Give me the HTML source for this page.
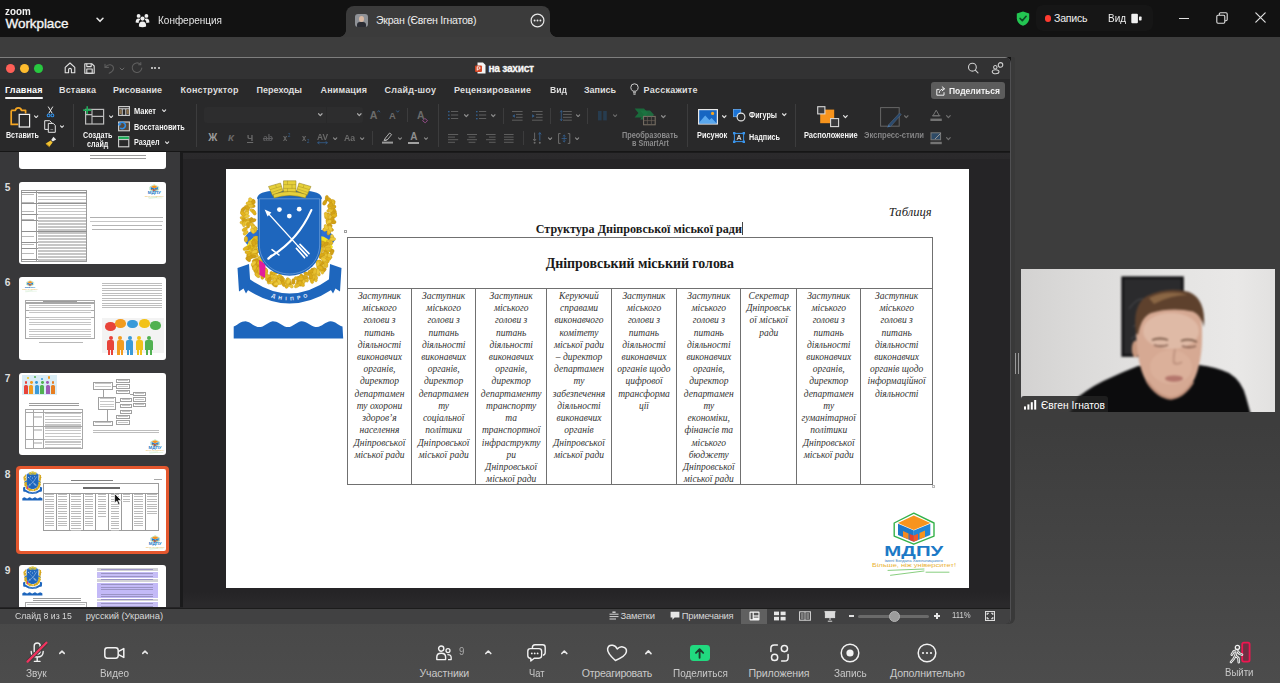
<!DOCTYPE html>
<html lang="ru">
<head>
<meta charset="utf-8">
<title>Zoom Workplace</title>
<style>
*{box-sizing:border-box;margin:0;padding:0}
html,body{width:1280px;height:683px;overflow:hidden;background:#3e3e3e}
body{font-family:"Liberation Sans",sans-serif;color:#e8e8e8;font-size:11px}
#root{position:relative;width:1280px;height:683px;overflow:hidden;background:linear-gradient(180deg,#3d3d3d 0,#3d3d3d 425px,#4c4c4c 683px)}
.a{position:absolute}
.t{position:absolute;white-space:nowrap;line-height:1}
svg{position:absolute;overflow:visible}
#topbar{left:0;top:0;width:1280px;height:37px;background:#121212}
#tab{left:346px;top:5.5px;width:204px;height:31.5px;background:#3b3b3b;border-radius:8px 8px 0 0}
#ppt{left:0;top:57px;width:1011.4px;height:567px;background:#252426;border-radius:0 6px 5px 0;border-right:1px solid #505052;overflow:hidden}
#ptitle{left:0;top:0;width:1012px;height:22px;background:#323233;border-top:1px solid #7e7e7e}
#ptabs{left:0;top:22px;width:1012px;height:21px;background:#29292a}
#ribbon{left:0;top:43px;width:1012px;height:52px;background:#29292a;border-bottom:1px solid #161616}
#panel{left:0;top:95px;width:180px;height:455px;background:#38383a;overflow:hidden}
#pdiv{left:180px;top:95px;width:3px;height:455px;background:#1a1a1b}
#main{left:183px;top:95px;width:829px;height:456px;background:linear-gradient(180deg,#1b1b1c 0,#1b1b1c 1.4px,#2b2a2c 1.4px,#2a292b 7px,#252426 7.5px,#252426 440px,#2a292b 452px)}
#slide{left:225.8px;top:111.8px;width:743.5px;height:419.4px;background:#fff;overflow:hidden}
#status{left:0;top:550.6px;width:1012px;height:16.4px;background:#414142;border-top:1px solid #1c1c1c}
#tbl{border:1px solid #707070}
.v{position:absolute;top:119.4px;width:1px;height:196.2px;background:#707070}
.c{text-align:center;font:italic 9.5px/12.23px "Liberation Serif",serif;color:#333;white-space:nowrap}
#tool{left:0;top:624px;width:1280px;height:59px}
#cam{left:1021px;top:269px;width:254px;height:143px;background:#c9c8c6;overflow:hidden}

</style>
</head>
<body>
<div id="root">
<div class="a" id="topbar"></div>
<div class="a" id="tab"></div>
<div class="a" style="left:339px;top:30px;width:7px;height:7px;background:radial-gradient(circle at 0 0,transparent 6.6px,#3b3b3b 7.2px)"></div>
<div class="a" style="left:550px;top:30px;width:7px;height:7px;background:radial-gradient(circle at 100% 0,transparent 6.6px,#3b3b3b 7.2px)"></div>
<div class="t" style='left:5.3px;top:6.6px;font-size:10.2px;color:#f2f2f2;transform:scaleX(0.966);transform-origin:0 0;font-weight:700;'>zoom</div>
<div class="t" style='left:5.6px;top:17.2px;font-size:13.5px;color:#f5f5f5;letter-spacing:-0.08px;-webkit-text-stroke:.35px #f5f5f5;'>Workplace</div>
<svg style="left:95.6px;top:16.8px" width="8" height="6.4" viewBox="0 0 10 8"><path d="M1.3,1.6 L5,5.4 L8.7,1.6" fill="none" stroke="#e6e6e6" stroke-width="2" stroke-linecap="round" stroke-linejoin="round"/></svg>
<svg style="left:135px;top:12.5px" width="15" height="15" viewBox="0 0 15 15" fill="#f0f0f0"><circle cx="7.5" cy="5.6" r="2.1"/><circle cx="3.6" cy="2.9" r="1.9"/><circle cx="11.4" cy="2.9" r="1.9"/><path d="M0.6,9.6 Q0.6,5.6 3.6,5.6 Q5,5.6 5.3,6.6 Q3.4,7.8 3.6,10 Z"/><path d="M14.4,9.6 Q14.4,5.6 11.4,5.6 Q10,5.6 9.7,6.6 Q11.6,7.8 11.4,10 Z"/><path d="M3.9,13.6 Q3.5,8.4 7.5,8.4 Q11.5,8.4 11.1,13.6 Q7.5,15 3.9,13.6 Z"/></svg>
<div class="t" style='left:158.0px;top:15.2px;font-size:10.6px;color:#e4e4e4;transform:scaleX(0.943);transform-origin:0 0;'>Конференция</div>
<div class="a" style="left:355px;top:14px;width:13px;height:13px;border-radius:3px;background:#8f9297;overflow:hidden"><div class="a" style="left:4px;top:2px;width:5px;height:6px;border-radius:50%;background:#d9b8a2"></div><div class="a" style="left:2px;top:8px;width:9px;height:6px;border-radius:3px 3px 0 0;background:#2a2c33"></div></div>
<div class="t" style='left:376.0px;top:15.3px;font-size:10.6px;color:#ececec;letter-spacing:-0.28px;'>Экран (Євген Ігнатов)</div>
<svg style="left:529.5px;top:12.5px" width="15" height="15" viewBox="0 0 15 15"><circle cx="7.5" cy="7.5" r="6.4" fill="none" stroke="#e8e8e8" stroke-width="1.2"/><circle cx="4.6" cy="7.5" r=".95" fill="#e8e8e8"/><circle cx="7.5" cy="7.5" r=".95" fill="#e8e8e8"/><circle cx="10.4" cy="7.5" r=".95" fill="#e8e8e8"/></svg>
<div class="a" style="left:1036px;top:5px;width:117px;height:26px;border-radius:7px;background:#161616"></div>
<svg style="left:1015.5px;top:10.5px" width="14" height="15" viewBox="0 0 14 15"><path d="M7,0.4 L13.2,2.6 V7.2 C13.2,11 10.3,13.6 7,14.7 C3.7,13.6 0.8,11 0.8,7.2 V2.6 Z" fill="#23c552"/><path d="M4.1,7.5 L6.3,9.7 L10.1,5.3" fill="none" stroke="#0d4a26" stroke-width="1.7" stroke-linecap="round" stroke-linejoin="round"/></svg>
<div class="a" style="left:1044.5px;top:15px;width:6.5px;height:6.5px;border-radius:50%;background:#ff3b30"></div>
<div class="t" style='left:1054.0px;top:13.0px;font-size:10.6px;color:#f0f0f0;letter-spacing:-0.25px;'>Запись</div>
<div class="t" style='left:1107.5px;top:13.0px;font-size:10.6px;color:#f0f0f0;transform:scaleX(0.939);transform-origin:0 0;'>Вид</div>
<svg style="left:1131px;top:12.5px" width="11" height="11" viewBox="0 0 11 11"><rect x="0.3" y="0.8" width="6.6" height="9.4" rx="1" fill="#f0f0f0"/><rect x="8" y="3.6" width="2.6" height="3.8" rx=".6" fill="#f0f0f0"/></svg>
<div class="a" style="left:1178.5px;top:17.5px;width:10.5px;height:1.2px;background:#e0e0e0"></div>
<svg style="left:1215.5px;top:11.5px" width="12" height="12" viewBox="0 0 12 12" fill="none" stroke="#e0e0e0" stroke-width="1.1"><rect x="0.8" y="3.2" width="8" height="8" rx="1.2"/><path d="M3.3,3 V2 Q3.3,0.8 4.5,0.8 H10 Q11.2,0.8 11.2,2 V7.5 Q11.2,8.7 10,8.7 H9"/></svg>
<svg style="left:1254.5px;top:12px" width="11" height="11" viewBox="0 0 11 11"><path d="M0.8,0.8 L10.2,10.2 M10.2,0.8 L0.8,10.2" stroke="#e0e0e0" stroke-width="1.2" stroke-linecap="round"/></svg>
<div class="a" id="pptshadow" style="left:1004px;top:57px;width:10.6px;height:567px;background:#393939;border-radius:0 2px 6px 0"></div><div class="a" style="left:1004px;top:57px;width:7.4px;height:7px;background:#141414"></div>
<div class="a" id="ppt">
<div class="a" id="ptitle"></div><div class="a" id="ptabs"></div>
<div class="a" style="left:5.9px;top:6.5px;width:9.4px;height:9.4px;border-radius:50%;background:#fe5f57"></div>
<div class="a" style="left:19.9px;top:6.5px;width:9.4px;height:9.4px;border-radius:50%;background:#febc2e"></div>
<div class="a" style="left:34.0px;top:6.5px;width:9.4px;height:9.4px;border-radius:50%;background:#28c840"></div>
<svg style="left:64px;top:5.0px" width="12" height="12" viewBox="0 0 12 12" fill="none" stroke="#e2e2e2" stroke-width="1.1" stroke-linejoin="round"><path d="M1.2,5.4 L6,1 L10.8,5.4 V10.8 H7.4 V7.6 Q7.4,6.4 6,6.4 Q4.6,6.4 4.6,7.6 V10.8 H1.2 Z"/></svg>
<svg style="left:83.5px;top:5.8px" width="11" height="11" viewBox="0 0 11 11" fill="none" stroke="#e2e2e2" stroke-width="1.1" stroke-linejoin="round"><path d="M0.8,0.8 H8 L10.2,3 V10.2 H0.8 Z"/><path d="M2.8,0.8 V3.6 H7.2 V0.8"/><rect x="2.8" y="6" width="5.4" height="4.2"/></svg>
<svg style="left:103.5px;top:5.6px" width="11" height="11" viewBox="0 0 11 11" fill="none" stroke="#5e5e5e" stroke-width="1.1" stroke-linecap="round" stroke-linejoin="round"><path d="M1,1.2 V4.4 H4.4"/><path d="M1.3,4.2 Q3.4,1.4 6.4,1.8 Q9.8,2.6 9.4,6 Q9,8.6 5.2,10.2"/></svg>
<svg style="left:118.5px;top:9.6px" width="6" height="4" viewBox="0 0 6 4"><path d="M0.8,0.8 L3,3 L5.2,0.8" fill="none" stroke="#6a6a6a" stroke-width="1"/></svg>
<svg style="left:130.5px;top:5.4px" width="12" height="12" viewBox="0 0 12 12" fill="none" stroke="#5e5e5e" stroke-width="1.1" stroke-linecap="round"><path d="M9.4,2.3 A4.8,4.8 0 1 0 10.8,6"/><path d="M9.8,0.6 V2.8 H7.6"/></svg>
<div class="a" style="left:150.6px;top:10.2px;width:2px;height:2px;border-radius:50%;background:#e0e0e0"></div>
<div class="a" style="left:154.3px;top:10.2px;width:2px;height:2px;border-radius:50%;background:#e0e0e0"></div>
<div class="a" style="left:158.0px;top:10.2px;width:2px;height:2px;border-radius:50%;background:#e0e0e0"></div>
<svg style="left:475px;top:5.0px" width="11" height="12" viewBox="0 0 11 12"><path d="M2.5,0.5 H8 L10.5,3 V11.5 H2.5 Z" fill="#f4f4f4"/><rect x="0" y="3.4" width="7" height="6.6" rx="1" fill="#d24625"/><path d="M2.2,8.6 V4.8 H3.7 Q5,4.8 5,6 Q5,7.2 3.7,7.2 H2.2" fill="none" stroke="#fff" stroke-width=".9"/></svg>
<div class="t" style='left:488.5px;top:6.8px;font-size:10.2px;color:#f6f6f6;letter-spacing:-0.29px;font-weight:700;-webkit-text-stroke:.3px #f6f6f6;'>на захист</div>
<svg style="left:967px;top:5.0px" width="12" height="12" viewBox="0 0 12 12" fill="none" stroke="#cfcfcf" stroke-width="1.1" stroke-linecap="round"><circle cx="5.4" cy="5.2" r="3.9"/><path d="M8.3,8.2 L11,10.9"/></svg>
<svg style="left:991px;top:5.0px" width="13" height="13" viewBox="0 0 13 13" fill="none" stroke="#cfcfcf" stroke-width="1.05"><circle cx="9.5" cy="2.9" r="2.3"/><circle cx="4.3" cy="5.2" r="1.7"/><ellipse cx="4.6" cy="9.8" rx="3.4" ry="2"/></svg>
<div class="t" style='left:5.0px;top:29.1px;font-size:9px;color:#ffffff;letter-spacing:0.15px;font-weight:700;'>Главная</div>
<div class="t" style='left:59.0px;top:29.1px;font-size:9px;color:#dedede;letter-spacing:0.17px;font-weight:700;'>Вставка</div>
<div class="t" style='left:113.0px;top:29.1px;font-size:9px;color:#dedede;letter-spacing:0.07px;font-weight:700;'>Рисование</div>
<div class="t" style='left:180.5px;top:29.1px;font-size:9px;color:#dedede;letter-spacing:0.20px;font-weight:700;'>Конструктор</div>
<div class="t" style='left:256.5px;top:29.1px;font-size:9px;color:#dedede;letter-spacing:0.01px;font-weight:700;'>Переходы</div>
<div class="t" style='left:320.5px;top:29.1px;font-size:9px;color:#dedede;letter-spacing:0.17px;font-weight:700;'>Анимация</div>
<div class="t" style='left:384.5px;top:29.1px;font-size:9px;color:#dedede;letter-spacing:0.27px;font-weight:700;'>Слайд-шоу</div>
<div class="t" style='left:454.0px;top:29.1px;font-size:9px;color:#dedede;letter-spacing:0.22px;font-weight:700;'>Рецензирование</div>
<div class="t" style='left:549.5px;top:29.1px;font-size:9px;color:#dedede;transform:scaleX(0.958);transform-origin:0 0;font-weight:700;'>Вид</div>
<div class="t" style='left:584.0px;top:29.1px;font-size:9px;color:#dedede;letter-spacing:-0.03px;font-weight:700;'>Запись</div>
<div class="t" style='left:643.5px;top:29.1px;font-size:9px;color:#dedede;letter-spacing:0.25px;font-weight:700;'>Расскажите</div>
<div class="a" style="left:5px;top:40.4px;width:37.5px;height:1.6px;background:#f4f4f4;border-radius:1px"></div>
<svg style="left:629.5px;top:26.2px" width="9" height="12" viewBox="0 0 9 12" fill="none" stroke="#d0d0d0" stroke-width="1"><path d="M2.8,8.2 Q0.8,6.6 0.8,4.4 Q0.8,0.8 4.5,0.8 Q8.2,0.8 8.2,4.4 Q8.2,6.6 6.2,8.2 Z"/><path d="M3,9.8 H6 M3.4,11.2 H5.6"/></svg>
<div class="a" style="left:930.5px;top:25.3px;width:74px;height:17px;border-radius:3px;background:#5c5c5c"></div>
<svg style="left:936px;top:28.8px" width="10" height="10" viewBox="0 0 10 10" fill="none" stroke="#f0f0f0" stroke-width="1" stroke-linejoin="round" stroke-linecap="round"><path d="M3,3.4 H0.8 V9.2 H8 V6.6"/><path d="M3.2,6.6 Q3.6,3 8,2.8"/><path d="M6.2,0.8 L8.6,2.8 L6.2,4.8"/></svg>
<div class="t" style='left:949.0px;top:29.2px;font-size:9.4px;color:#f4f4f4;transform:scaleX(0.906);transform-origin:0 0;font-weight:700;'>Поделиться</div>
<div class="a" id="ribbon"></div>
<svg style="left:10.0px;top:50.0px" width="21.0" height="21.0" viewBox="0 0 21 21" ><path d="M1.2,3.4 H5.4 Q5.8,0.8 8.4,0.8 Q11,0.8 11.4,3.4 H15.6 V6.5 M1.2,3.4 V17.4 H8.2" fill="none" stroke="#f5a623" stroke-width="1.7" stroke-linejoin="round"/><rect x="9.2" y="7.4" width="10.4" height="12.6" fill="#2a2a2b" stroke="#f2f2f2" stroke-width="1.2"/></svg>
<svg style="left:33.5px;top:57.7px" width="4.3" height="3.6" viewBox="0 0 10 7"><path d="M1.2,1.2 L5,5.2 L8.8,1.2" fill="none" stroke="#e4e4e4" stroke-width="2.6" stroke-linecap="round" stroke-linejoin="round"/></svg>
<div class="t" style='left:5.7px;top:74.8px;font-size:8.2px;color:#f4f4f4;transform:scaleX(0.863);transform-origin:0 0;font-weight:700;'>Вставить</div>
<svg style="left:46.5px;top:48.8px" width="7.0" height="12.0" viewBox="0 0 7 12" ><path d="M1.2,0.6 L5.2,7.4 M5.8,0.6 L1.8,7.4" stroke="#e8e8e8" stroke-width="1" fill="none"/><circle cx="1.6" cy="9.4" r="1.4" fill="none" stroke="#2f8fe8" stroke-width="1.1"/><circle cx="5.4" cy="9.4" r="1.4" fill="none" stroke="#2f8fe8" stroke-width="1.1"/></svg>
<svg style="left:44.2px;top:63.3px" width="12.0" height="13.0" viewBox="0 0 12 13" ><path d="M0.7,0.7 H5.6 L7.4,2.4 V9.4 H0.7 Z" fill="#2a2a2b" stroke="#e6e6e6" stroke-width="1"/><path d="M4.3,3.4 H9.2 L11.3,5.4 V12.3 H4.3 Z" fill="#2a2a2b" stroke="#e6e6e6" stroke-width="1"/><path d="M6.4,9.6 H9.2" stroke="#9a9a9a" stroke-width=".8"/></svg>
<svg style="left:60.2px;top:67.9px" width="4.0" height="3.6" viewBox="0 0 10 7"><path d="M1.2,1.2 L5,5.2 L8.8,1.2" fill="none" stroke="#e4e4e4" stroke-width="2.6" stroke-linecap="round" stroke-linejoin="round"/></svg>
<svg style="left:44.5px;top:79.0px" width="12.0" height="12.0" viewBox="0 0 12 12" ><path d="M8.4,0.8 L11.2,3.6 L7.8,5.6 L6.2,4 Z" fill="#e8e8e8"/><path d="M5.6,4.4 L7.6,6.4 L4.4,10.8 L0.8,7.6 Z" fill="#f2c230"/><path d="M0.8,7.6 L4.4,10.8" stroke="#b98a14" stroke-width="1"/></svg>
<div class="a" style="left:73.0px;top:47.0px;width:1px;height:43.0px;background:#3c3c3d"></div>
<svg style="left:82.5px;top:48.6px" width="22.0" height="20.0" viewBox="0 0 22 20" ><rect x="2.6" y="3.4" width="18" height="14.6" fill="none" stroke="#bdbdbd" stroke-width="1.2"/><path d="M9,3.4 V18 M9,10.4 H20.6 M2.6,8.6 H9" stroke="#bdbdbd" stroke-width="1.1"/><path d="M4.2,0.2 V8 M0.2,4.1 H8.4" stroke="#1faa59" stroke-width="1.6"/></svg>
<svg style="left:108.7px;top:57.7px" width="4.2" height="3.6" viewBox="0 0 10 7"><path d="M1.2,1.2 L5,5.2 L8.8,1.2" fill="none" stroke="#e4e4e4" stroke-width="2.6" stroke-linecap="round" stroke-linejoin="round"/></svg>
<div class="t" style='left:82.9px;top:75.2px;font-size:8.2px;color:#f4f4f4;transform:scaleX(0.873);transform-origin:0 0;font-weight:700;'>Создать</div>
<div class="t" style='left:87.0px;top:83.7px;font-size:8.2px;color:#f4f4f4;transform:scaleX(0.868);transform-origin:0 0;font-weight:700;'>слайд</div>
<svg style="left:118.2px;top:49.0px" width="12.0" height="10.0" viewBox="0 0 12 10" ><rect x="0.6" y="0.6" width="10.8" height="8.8" fill="none" stroke="#d4d4d4" stroke-width="1.1"/><path d="M0.6,2.8 H11.4 M4.2,2.8 V9.4 M7.8,2.8 V9.4" stroke="#d4d4d4" stroke-width="1"/><rect x="1.4" y="3.6" width="2.2" height="4.4" fill="#8a6f4a"/><rect x="8.6" y="3.6" width="2.2" height="4.4" fill="#8a6f4a"/></svg>
<div class="t" style='left:134.0px;top:51.0px;font-size:8.2px;color:#f4f4f4;transform:scaleX(0.915);transform-origin:0 0;font-weight:700;'>Макет</div>
<svg style="left:161.5px;top:52.4px" width="4.2" height="3.6" viewBox="0 0 10 7"><path d="M1.2,1.2 L5,5.2 L8.8,1.2" fill="none" stroke="#e4e4e4" stroke-width="2.6" stroke-linecap="round" stroke-linejoin="round"/></svg>
<svg style="left:118.2px;top:64.2px" width="12.0" height="10.4" viewBox="0 0 12 10.4" ><rect x="0.6" y="1" width="10.8" height="8.8" fill="#56483a" stroke="#d4d4d4" stroke-width="1.1"/><path d="M1,4.2 A3.2,3.2 0 1 1 2.2,7" fill="none" stroke="#2f8fe8" stroke-width="1.6"/><path d="M0.2,2.2 L1,5 L3.6,3.8 Z" fill="#2f8fe8"/></svg>
<div class="t" style='left:134.0px;top:66.6px;font-size:8.2px;color:#f4f4f4;transform:scaleX(0.883);transform-origin:0 0;font-weight:700;'>Восстановить</div>
<svg style="left:118.2px;top:79.4px" width="11.4" height="11.4" viewBox="0 0 11.4 11.4" ><rect x="0.6" y="0.6" width="10.2" height="10.2" fill="none" stroke="#d4d4d4" stroke-width="1.1"/><rect x="0.6" y="0.6" width="10.2" height="2.6" fill="#1faa59"/><path d="M0.6,3.6 H10.8" stroke="#d4d4d4" stroke-width="1"/></svg>
<div class="t" style='left:134.0px;top:81.5px;font-size:8.2px;color:#f4f4f4;transform:scaleX(0.878);transform-origin:0 0;font-weight:700;'>Раздел</div>
<svg style="left:165.0px;top:84.0px" width="4.2" height="3.6" viewBox="0 0 10 7"><path d="M1.2,1.2 L5,5.2 L8.8,1.2" fill="none" stroke="#e4e4e4" stroke-width="2.6" stroke-linecap="round" stroke-linejoin="round"/></svg>
<div class="a" style="left:196.1px;top:47.0px;width:1px;height:43.0px;background:#3c3c3d"></div>
<div class="a" style="left:204px;top:50.2px;width:121.5px;height:15.4px;background:#2d2d2e;border-radius:3px 0 0 3px"></div>
<div class="a" style="left:326.5px;top:50.2px;width:36.6px;height:15.4px;background:#2d2d2e;border-radius:0 3px 3px 0"></div>
<svg style="left:318.0px;top:56.4px" width="4.6" height="3.6" viewBox="0 0 10 7"><path d="M1.2,1.2 L5,5.2 L8.8,1.2" fill="none" stroke="#a8a8a8" stroke-width="2.6" stroke-linecap="round" stroke-linejoin="round"/></svg>
<svg style="left:357.4px;top:56.4px" width="4.6" height="3.6" viewBox="0 0 10 7"><path d="M1.2,1.2 L5,5.2 L8.8,1.2" fill="none" stroke="#a8a8a8" stroke-width="2.6" stroke-linecap="round" stroke-linejoin="round"/></svg>
<div class="t" style='left:369.8px;top:53.4px;font-size:10.6px;color:#6b6b6b;letter-spacing:-0.06px;font-weight:700;'>A</div>
<div class="t" style='left:389.0px;top:54.4px;font-size:9.4px;color:#6b6b6b;letter-spacing:0.02px;font-weight:700;'>A</div>
<svg style="left:377.0px;top:52.6px" width="3.4" height="2.6" viewBox="0 0 4 3" ><path d="M0.4,2.6 L2,0.6 L3.6,2.6" fill="none" stroke="#34608f" stroke-width="1"/></svg>
<svg style="left:395.6px;top:52.8px" width="3.4" height="2.6" viewBox="0 0 4 3" ><path d="M0.4,0.6 L2,2.6 L3.6,0.6" fill="none" stroke="#34608f" stroke-width="1"/></svg>
<div class="a" style="left:406.8px;top:51.0px;width:1px;height:14.0px;background:#3c3c3d"></div>
<div class="t" style='left:417.0px;top:54.2px;font-size:10.4px;color:#6b6b6b;letter-spacing:-0.12px;font-weight:700;'>A</div>
<svg style="left:422.4px;top:60.6px" width="6.0" height="5.2" viewBox="0 0 6 5.2" ><path d="M2.8,0.4 L5.6,2.6 L3.2,4.8 L0.6,2.8 Z" fill="none" stroke="#8e4a84" stroke-width="1"/></svg>
<div class="t" style='left:208.3px;top:75.8px;font-size:10px;color:#9c9c9c;letter-spacing:0.05px;font-weight:700;'>Ж</div>
<div class="t" style='left:228.0px;top:76.2px;font-size:9.6px;color:#6b6b6b;letter-spacing:0.44px;font-weight:700;font-style:italic;'>К</div>
<div class="t" style='left:246.6px;top:75.7px;font-size:9.4px;color:#6b6b6b;transform:scaleX(0.940);transform-origin:0 0;font-weight:700;text-decoration:underline;'>Ч</div>
<div class="t" style='left:263.0px;top:76.9px;font-size:8.8px;color:#5c5c5e;transform:scaleX(0.963);transform-origin:0 0;font-weight:700;text-decoration:line-through;'>ab</div>
<div class="t" style='left:283.4px;top:76.5px;font-size:9.2px;color:#6b6b6b;transform:scaleX(0.820);transform-origin:0 0;font-weight:700;'>x</div>
<div class="t" style='left:287.8px;top:75.5px;font-size:5px;color:#34608f;transform:scaleX(0.863);transform-origin:0 0;'>2</div>
<div class="t" style='left:302.3px;top:76.5px;font-size:9.2px;color:#6b6b6b;transform:scaleX(0.820);transform-origin:0 0;font-weight:700;'>x</div>
<div class="t" style='left:306.7px;top:81.9px;font-size:5px;color:#34608f;transform:scaleX(0.863);transform-origin:0 0;'>2</div>
<div class="t" style='left:317.0px;top:74.7px;font-size:9.4px;color:#6b6b6b;transform:scaleX(0.892);transform-origin:0 0;font-weight:700;'>AV</div>
<svg style="left:317.0px;top:83.7px" width="11.0" height="3.4" viewBox="0 0 11 3.4" ><path d="M0.6,1.7 H10.4 M2.4,0.4 L0.6,1.7 L2.4,3 M8.6,0.4 L10.4,1.7 L8.6,3" fill="none" stroke="#34608f" stroke-width=".8"/></svg>
<svg style="left:333.2px;top:80.0px" width="4.3" height="3.6" viewBox="0 0 10 7"><path d="M1.2,1.2 L5,5.2 L8.8,1.2" fill="none" stroke="#8c8c8c" stroke-width="2.6" stroke-linecap="round" stroke-linejoin="round"/></svg>
<div class="t" style='left:344.4px;top:76.3px;font-size:9.4px;color:#6b6b6b;transform:scaleX(0.926);transform-origin:0 0;font-weight:700;'>Aa</div>
<svg style="left:360.2px;top:80.0px" width="4.3" height="3.6" viewBox="0 0 10 7"><path d="M1.2,1.2 L5,5.2 L8.8,1.2" fill="none" stroke="#8c8c8c" stroke-width="2.6" stroke-linecap="round" stroke-linejoin="round"/></svg>
<div class="a" style="left:371.7px;top:74.0px;width:1px;height:14.0px;background:#3c3c3d"></div>
<svg style="left:382.0px;top:75.4px" width="11.0" height="12.0" viewBox="0 0 11 12" ><path d="M3,6.6 L7.6,1 L9.6,2.6 L5,8.2 Z M2.8,6.8 L2,8.6 L4.6,8.4" fill="none" stroke="#b0b0b0" stroke-width="1"/><rect x="0" y="9.6" width="11" height="2" fill="#9a9a9a"/></svg>
<svg style="left:397.6px;top:80.0px" width="4.0" height="3.6" viewBox="0 0 10 7"><path d="M1.2,1.2 L5,5.2 L8.8,1.2" fill="none" stroke="#8c8c8c" stroke-width="2.6" stroke-linecap="round" stroke-linejoin="round"/></svg>
<div class="t" style='left:410.2px;top:74.6px;font-size:10px;color:#8e8e8e;letter-spacing:0.37px;font-weight:700;'>A</div>
<div class="a" style="left:408.4px;top:84.8px;width:11px;height:2px;background:#a2a2a2"></div>
<svg style="left:424.2px;top:80.0px" width="4.0" height="3.6" viewBox="0 0 10 7"><path d="M1.2,1.2 L5,5.2 L8.8,1.2" fill="none" stroke="#8c8c8c" stroke-width="2.6" stroke-linecap="round" stroke-linejoin="round"/></svg>
<div class="a" style="left:437.6px;top:47.0px;width:1px;height:43.0px;background:#3c3c3d"></div>
<svg style="left:448.3px;top:54.2px" width="10.2" height="10.5" viewBox="0 0 10.2 10.5" ><rect x="3.0" y="0.0" width="7.2" height="1.0" fill="#5e5e5e"/><rect x="0.0" y="0.0" width="1.6" height="1.3" fill="#34608f"/><rect x="3.0" y="3.5" width="7.2" height="1.0" fill="#5e5e5e"/><rect x="0.0" y="3.5" width="1.6" height="1.3" fill="#34608f"/><rect x="3.0" y="7.0" width="7.2" height="1.0" fill="#5e5e5e"/><rect x="0.0" y="7.0" width="1.6" height="1.3" fill="#34608f"/></svg>
<svg style="left:464.0px;top:57.4px" width="4.6" height="3.6" viewBox="0 0 10 7"><path d="M1.2,1.2 L5,5.2 L8.8,1.2" fill="none" stroke="#8c8c8c" stroke-width="2.6" stroke-linecap="round" stroke-linejoin="round"/></svg>
<svg style="left:475.7px;top:54.2px" width="10.2" height="10.5" viewBox="0 0 10.2 10.5" ><rect x="3.0" y="0.0" width="7.2" height="1.0" fill="#5e5e5e"/><rect x="0.0" y="0.0" width="1.6" height="1.3" fill="#34608f"/><rect x="3.0" y="3.5" width="7.2" height="1.0" fill="#5e5e5e"/><rect x="0.0" y="3.5" width="1.6" height="1.3" fill="#34608f"/><rect x="3.0" y="7.0" width="7.2" height="1.0" fill="#5e5e5e"/><rect x="0.0" y="7.0" width="1.6" height="1.3" fill="#34608f"/></svg>
<svg style="left:490.5px;top:57.4px" width="4.5" height="3.6" viewBox="0 0 10 7"><path d="M1.2,1.2 L5,5.2 L8.8,1.2" fill="none" stroke="#8c8c8c" stroke-width="2.6" stroke-linecap="round" stroke-linejoin="round"/></svg>
<div class="a" style="left:503.0px;top:51.0px;width:1px;height:16.0px;background:#3c3c3d"></div>
<svg style="left:512.3px;top:53.6px" width="10.6" height="11.6" viewBox="0 0 10.6 11.6" ><rect x="0.0" y="0.0" width="10.6" height="1.0" fill="#5e5e5e"/><rect x="4.0" y="2.9" width="6.6" height="1.0" fill="#5e5e5e"/><rect x="4.0" y="5.8" width="6.6" height="1.0" fill="#5e5e5e"/><rect x="0.0" y="8.7" width="10.6" height="1.0" fill="#5e5e5e"/></svg>
<svg style="left:512.3px;top:56.6px" width="3.0" height="4.0" viewBox="0 0 3 4" ><path d="M2.8,0.2 L0.4,2 L2.8,3.8 Z" fill="#34608f"/></svg>
<svg style="left:531.6px;top:53.6px" width="10.6" height="11.6" viewBox="0 0 10.6 11.6" ><rect x="0.0" y="0.0" width="10.6" height="1.0" fill="#5e5e5e"/><rect x="4.0" y="2.9" width="6.6" height="1.0" fill="#5e5e5e"/><rect x="4.0" y="5.8" width="6.6" height="1.0" fill="#5e5e5e"/><rect x="0.0" y="8.7" width="10.6" height="1.0" fill="#5e5e5e"/></svg>
<svg style="left:531.6px;top:56.6px" width="3.0" height="4.0" viewBox="0 0 3 4" ><path d="M0.2,0.2 L2.6,2 L0.2,3.8 Z" fill="#34608f"/></svg>
<div class="a" style="left:550.4px;top:51.0px;width:1px;height:16.0px;background:#3c3c3d"></div>
<svg style="left:562.5px;top:53.8px" width="8.8" height="11.6" viewBox="0 0 8.8 11.6" ><rect x="0.0" y="0.0" width="8.8" height="1.0" fill="#5e5e5e"/><rect x="0.0" y="2.9" width="8.8" height="1.0" fill="#5e5e5e"/><rect x="0.0" y="5.8" width="8.8" height="1.0" fill="#5e5e5e"/><rect x="0.0" y="8.7" width="8.8" height="1.0" fill="#5e5e5e"/></svg>
<svg style="left:559.6px;top:53.2px" width="2.6" height="11.4" viewBox="0 0 2.6 11.4" ><path d="M1.3,0.6 V10.8 M0.2,2.2 L1.3,0.6 L2.4,2.2 M0.2,9.2 L1.3,10.8 L2.4,9.2" fill="none" stroke="#34608f" stroke-width=".8"/></svg>
<svg style="left:575.8px;top:57.4px" width="4.2" height="3.6" viewBox="0 0 10 7"><path d="M1.2,1.2 L5,5.2 L8.8,1.2" fill="none" stroke="#8c8c8c" stroke-width="2.6" stroke-linecap="round" stroke-linejoin="round"/></svg>
<div class="a" style="left:586.9px;top:51.0px;width:1px;height:16.0px;background:#3c3c3d"></div>
<svg style="left:597.6px;top:53.8px" width="8.8" height="9.4" viewBox="0 0 8.8 9.4" ><rect x="0" y="0" width="3.6" height="9.4" fill="#273c4f"/><rect x="5.2" y="0" width="3.6" height="9.4" fill="#273c4f"/></svg>
<svg style="left:612.8px;top:57.4px" width="4.2" height="3.6" viewBox="0 0 10 7"><path d="M1.2,1.2 L5,5.2 L8.8,1.2" fill="none" stroke="#6e6e6e" stroke-width="2.6" stroke-linecap="round" stroke-linejoin="round"/></svg>
<svg style="left:634.0px;top:51.2px" width="22.0" height="17.6" viewBox="0 0 22 17.6" ><path d="M0.6,0.6 H10 L14,5 L10,9.6 H0.6 L4.4,5 Z" fill="#1a6a3b"/><path d="M6,2.4 H16 L20,6.8 L16,11.4 H6 L9.8,6.8 Z" fill="#1c7442" opacity=".85"/><rect x="9.6" y="8.4" width="11.6" height="8.4" fill="#2a2a2b" stroke="#7d7468" stroke-width="1"/><path d="M13.4,8.4 V16.8 M17.4,8.4 V16.8 M9.6,12.6 H21.2" stroke="#6a6258" stroke-width=".7"/></svg>
<svg style="left:660.5px;top:57.6px" width="4.7" height="3.6" viewBox="0 0 10 7"><path d="M1.2,1.2 L5,5.2 L8.8,1.2" fill="none" stroke="#8c8c8c" stroke-width="2.6" stroke-linecap="round" stroke-linejoin="round"/></svg>
<svg style="left:448.3px;top:77.2px" width="10.2" height="10.4" viewBox="0 0 10.2 10.4" ><rect x="0.0" y="0.0" width="10.2" height="1.0" fill="#5e5e5e"/><rect x="0.0" y="2.6" width="7.0" height="1.0" fill="#5e5e5e"/><rect x="0.0" y="5.2" width="10.2" height="1.0" fill="#5e5e5e"/><rect x="0.0" y="7.8" width="7.0" height="1.0" fill="#5e5e5e"/></svg>
<svg style="left:467.2px;top:77.2px" width="10.0" height="10.4" viewBox="0 0 10.0 10.4" ><rect x="0.0" y="0.0" width="10.0" height="1.0" fill="#5e5e5e"/><rect x="1.6" y="2.6" width="6.8" height="1.0" fill="#5e5e5e"/><rect x="0.0" y="5.2" width="10.0" height="1.0" fill="#5e5e5e"/><rect x="1.6" y="7.8" width="6.8" height="1.0" fill="#5e5e5e"/></svg>
<svg style="left:485.9px;top:77.2px" width="9.6" height="10.4" viewBox="0 0 9.6 10.4" ><rect x="0.0" y="0.0" width="9.6" height="1.0" fill="#5e5e5e"/><rect x="3.0" y="2.6" width="6.6" height="1.0" fill="#5e5e5e"/><rect x="0.0" y="5.2" width="9.6" height="1.0" fill="#5e5e5e"/><rect x="3.0" y="7.8" width="6.6" height="1.0" fill="#5e5e5e"/></svg>
<svg style="left:504.1px;top:77.2px" width="9.6" height="10.4" viewBox="0 0 9.6 10.4" ><rect x="0.0" y="0.0" width="9.6" height="1.0" fill="#5e5e5e"/><rect x="0.0" y="2.6" width="9.6" height="1.0" fill="#5e5e5e"/><rect x="0.0" y="5.2" width="9.6" height="1.0" fill="#5e5e5e"/><rect x="0.0" y="7.8" width="9.6" height="1.0" fill="#5e5e5e"/></svg>
<div class="a" style="left:522.5px;top:74.0px;width:1px;height:14.0px;background:#3c3c3d"></div>
<svg style="left:533.2px;top:75.2px" width="9.0" height="12.0" viewBox="0 0 9 12" ><path d="M1.6,0.6 V8.6 M0.2,7 L1.6,9 L3,7" fill="none" stroke="#6e6e6e" stroke-width=".9"/><path d="M6.8,0.6 V8.6 M5.4,2.4 L6.8,0.6 L8.2,2.4" fill="none" stroke="#34608f" stroke-width=".9"/><circle cx="1.6" cy="10.8" r="1" fill="#6e6e6e"/><circle cx="6.8" cy="10.8" r="1" fill="#6e6e6e"/></svg>
<svg style="left:547.8px;top:80.0px" width="4.2" height="3.6" viewBox="0 0 10 7"><path d="M1.2,1.2 L5,5.2 L8.8,1.2" fill="none" stroke="#8c8c8c" stroke-width="2.6" stroke-linecap="round" stroke-linejoin="round"/></svg>
<svg style="left:558.0px;top:75.6px" width="12.4" height="11.0" viewBox="0 0 12.4 11" ><path d="M2.6,0.6 H0.6 V10.4 H2.6 M9.8,0.6 H11.8 V10.4 H9.8" fill="none" stroke="#6e6e6e" stroke-width="1"/><path d="M3.6,5.5 H8.8 M6.2,2 V9 M4.8,3.4 L6.2,2 L7.6,3.4 M4.8,7.6 L6.2,9 L7.6,7.6" fill="none" stroke="#34608f" stroke-width=".8"/></svg>
<svg style="left:575.2px;top:80.0px" width="4.2" height="3.6" viewBox="0 0 10 7"><path d="M1.2,1.2 L5,5.2 L8.8,1.2" fill="none" stroke="#8c8c8c" stroke-width="2.6" stroke-linecap="round" stroke-linejoin="round"/></svg>
<div class="t" style='left:622.0px;top:74.8px;font-size:8.2px;color:#8b8b8c;transform:scaleX(0.895);transform-origin:0 0;font-weight:700;'>Преобразовать</div>
<div class="t" style='left:631.7px;top:82.9px;font-size:8.2px;color:#8b8b8c;transform:scaleX(0.874);transform-origin:0 0;font-weight:700;'>в SmartArt</div>
<div class="a" style="left:687.0px;top:47.0px;width:1px;height:43.0px;background:#3c3c3d"></div>
<svg style="left:698.0px;top:51.6px" width="20.0" height="15.6" viewBox="0 0 20 15.6" ><rect x="0.6" y="0.6" width="18.8" height="14.4" fill="#1766c2" stroke="#e8e8e8" stroke-width="1.2"/><path d="M1.2,13.6 L7.2,6.4 L11.4,11 L13.6,9 L18.8,14.4 H1.2 Z" fill="#5aa8ee"/><circle cx="14.6" cy="4.4" r="1.6" fill="#f5a623"/></svg>
<svg style="left:722.0px;top:58.2px" width="4.5" height="3.6" viewBox="0 0 10 7"><path d="M1.2,1.2 L5,5.2 L8.8,1.2" fill="none" stroke="#e4e4e4" stroke-width="2.6" stroke-linecap="round" stroke-linejoin="round"/></svg>
<div class="t" style='left:696.7px;top:75.1px;font-size:8.2px;color:#f4f4f4;transform:scaleX(0.900);transform-origin:0 0;font-weight:700;'>Рисунок</div>
<svg style="left:732.6px;top:52.4px" width="12.6" height="12.6" viewBox="0 0 12.6 12.6" ><rect x="0.5" y="0.5" width="7.2" height="7.2" fill="#1a73d6" stroke="#64a9f0" stroke-width=".8"/><circle cx="8" cy="8" r="3.9" fill="#2a2a2b" stroke="#e8e8e8" stroke-width="1.1"/></svg>
<div class="t" style='left:749.0px;top:54.7px;font-size:8.2px;color:#f4f4f4;transform:scaleX(0.878);transform-origin:0 0;font-weight:700;'>Фигуры</div>
<svg style="left:781.7px;top:56.0px" width="4.5" height="3.6" viewBox="0 0 10 7"><path d="M1.2,1.2 L5,5.2 L8.8,1.2" fill="none" stroke="#e4e4e4" stroke-width="2.6" stroke-linecap="round" stroke-linejoin="round"/></svg>
<svg style="left:733.0px;top:75.0px" width="12.0" height="11.0" viewBox="0 0 12 11" ><rect x="1.4" y="1.4" width="9.2" height="8.2" fill="none" stroke="#3a94ea" stroke-width="1"/><g fill="#3a94ea"><rect x="0" y="0" width="2.4" height="2.4"/><rect x="9.6" y="0" width="2.4" height="2.4"/><rect x="0" y="8.6" width="2.4" height="2.4"/><rect x="9.6" y="8.6" width="2.4" height="2.4"/></g><path d="M4,8 L6,3 L8,8 M4.8,6.4 H7.2" fill="none" stroke="#e4e4e4" stroke-width=".9"/></svg>
<div class="t" style='left:749.0px;top:77.3px;font-size:8.2px;color:#f4f4f4;transform:scaleX(0.880);transform-origin:0 0;font-weight:700;'>Надпись</div>
<div class="a" style="left:795.0px;top:47.0px;width:1px;height:43.0px;background:#3c3c3d"></div>
<svg style="left:816.6px;top:49.0px" width="22.4" height="21.4" viewBox="0 0 22.4 21.4" ><rect x="3.2" y="3.6" width="14" height="13.6" fill="#f7941d"/><rect x="0.7" y="0.7" width="7.2" height="7.2" fill="#3a3a3c" stroke="#d8d8d8" stroke-width="1.1"/><rect x="13.6" y="12.6" width="8" height="8" fill="#3a3a3c" stroke="#d8d8d8" stroke-width="1.1"/></svg>
<svg style="left:842.5px;top:58.2px" width="4.8" height="3.6" viewBox="0 0 10 7"><path d="M1.2,1.2 L5,5.2 L8.8,1.2" fill="none" stroke="#e4e4e4" stroke-width="2.6" stroke-linecap="round" stroke-linejoin="round"/></svg>
<div class="t" style='left:804.3px;top:75.1px;font-size:8.2px;color:#f4f4f4;transform:scaleX(0.910);transform-origin:0 0;font-weight:700;'>Расположение</div>
<svg style="left:879.6px;top:50.0px" width="22.0" height="21.4" viewBox="0 0 22 21.4" ><rect x="0.6" y="0.6" width="18.6" height="18.6" fill="none" stroke="#666" stroke-width="1"/><path d="M8.4,18 L19.6,6 L21.2,7.6 L10.6,19.6 Z" fill="#2a4a6e" stroke="#54677c" stroke-width=".6"/><path d="M7.2,20.6 L8.4,18 L10.6,19.6 Z" fill="#4a78aa"/></svg>
<svg style="left:903.9px;top:58.2px" width="4.5" height="3.6" viewBox="0 0 10 7"><path d="M1.2,1.2 L5,5.2 L8.8,1.2" fill="none" stroke="#6e6e6e" stroke-width="2.6" stroke-linecap="round" stroke-linejoin="round"/></svg>
<div class="t" style='left:863.8px;top:75.1px;font-size:8.2px;color:#858586;transform:scaleX(0.931);transform-origin:0 0;font-weight:700;'>Экспресс-стили</div>
<svg style="left:929.6px;top:52.4px" width="12.2" height="12.4" viewBox="0 0 12.2 12.4" ><path d="M3,6.8 L6.2,1.2 L9.4,6.8 Z M2,6.8 H10.4" fill="none" stroke="#747474" stroke-width="1"/><rect x="0.4" y="9.6" width="11.4" height="2.4" fill="#747474"/></svg>
<svg style="left:945.6px;top:57.8px" width="4.8" height="3.6" viewBox="0 0 10 7"><path d="M1.2,1.2 L5,5.2 L8.8,1.2" fill="none" stroke="#6e6e6e" stroke-width="2.6" stroke-linecap="round" stroke-linejoin="round"/></svg>
<svg style="left:929.6px;top:75.0px" width="12.2" height="12.4" viewBox="0 0 12.2 12.4" ><rect x="1" y="0.8" width="9.6" height="7" fill="#2e4a66" stroke="#7a7a7a" stroke-width="1"/><path d="M5,7 L10.6,1.4" stroke="#9a9a9a" stroke-width="1"/><rect x="0.4" y="9.8" width="11.4" height="2.4" fill="#747474"/></svg>
<svg style="left:945.6px;top:80.4px" width="4.8" height="3.6" viewBox="0 0 10 7"><path d="M1.2,1.2 L5,5.2 L8.8,1.2" fill="none" stroke="#6e6e6e" stroke-width="2.6" stroke-linecap="round" stroke-linejoin="round"/></svg>
<div class="a" id="panel">
<div class="a" style="left:19.0px;top:-66.0px;width:147.3px;height:82.5px;background:#fff;border-radius:3px;overflow:hidden"><div class="a" style="left:71.0px;top:69.0px;width:56.0px;height:6.0px;background:repeating-linear-gradient(180deg,#9c9c9c 0,#9c9c9c 0.90px,transparent 0.90px,transparent 3.20px);"></div></div>
<div class="a" style="left:19.0px;top:29.8px;width:147.3px;height:82.5px;background:#fff;border-radius:3px;overflow:hidden"><div class="a" style="left:2.0px;top:8.5px;width:66.0px;height:72.0px;background:#fff;border:0.6px solid #9c9c9c;"></div><div class="a" style="left:2.0px;top:10.0px;width:66.0px;height:70.0px;background:repeating-linear-gradient(180deg,#909090 0,#909090 0.60px,transparent 0.60px,transparent 5.60px);"></div><div class="a" style="left:17.0px;top:8.5px;width:0.6px;height:72.0px;background:#9c9c9c;"></div><div class="a" style="left:18.5px;top:11.0px;width:48.0px;height:68.0px;background:repeating-linear-gradient(180deg,#c6c6c6 0,#c6c6c6 0.70px,transparent 0.70px,transparent 1.50px);"></div><div class="a" style="left:3.0px;top:12.0px;width:12.0px;height:66.0px;background:repeating-linear-gradient(180deg,#b8b8b8 0,#b8b8b8 0.80px,transparent 0.80px,transparent 8.40px);"></div><div class="a" style="left:71.0px;top:35.0px;width:72.5px;height:4.2px;background:repeating-linear-gradient(180deg,#b0b0b0 0,#b0b0b0 1.00px,transparent 1.00px,transparent 4.10px);"></div><div class="a" style="left:71.0px;top:39.1px;width:72.5px;height:4.2px;background:repeating-linear-gradient(180deg,#c6c6c6 0,#c6c6c6 1.00px,transparent 1.00px,transparent 4.10px);"></div><div class="a" style="left:73.0px;top:43.2px;width:70.0px;height:8.4px;background:repeating-linear-gradient(180deg,#b4b4b4 0,#b4b4b4 1.00px,transparent 1.00px,transparent 4.10px);"></div><svg style="left:129.0px;top:2.2px" width="13.0" height="15.2" viewBox="26 10 58 68"><use href="#mdpug"/></svg></div><div class="t" style='left:4.8px;top:31.0px;font-size:10.2px;color:#dedede;letter-spacing:-0.07px;font-weight:700;'>5</div>
<div class="a" style="left:19.0px;top:125.1px;width:147.3px;height:82.5px;background:#fff;border-radius:3px;overflow:hidden"><svg style="left:6.0px;top:2.5px" width="10.5" height="12.3" viewBox="26 10 58 68"><use href="#mdpug"/></svg><div class="a" style="left:83.0px;top:5.5px;width:60.0px;height:27.0px;background:repeating-linear-gradient(180deg,#bdbdbd 0,#bdbdbd 0.90px,transparent 0.90px,transparent 2.45px);"></div><div class="a" style="left:6.0px;top:22.6px;width:70.0px;height:3.6px;background:#fff;border:0.5px solid #a8a8a8;"></div><div class="a" style="left:24.0px;top:23.6px;width:34.0px;height:1.4px;background:repeating-linear-gradient(180deg,#9c9c9c 0,#9c9c9c 1.00px,transparent 1.00px,transparent 3.00px);"></div><div class="a" style="left:6.0px;top:26.2px;width:70.0px;height:36.0px;background:#fff;border:0.5px solid #a8a8a8;"></div><div class="a" style="left:6.0px;top:26.2px;width:70.0px;height:36.0px;background:repeating-linear-gradient(180deg,#a8a8a8 0,#a8a8a8 0.50px,transparent 0.50px,transparent 7.20px);"></div><div class="a" style="left:10.0px;top:28.0px;width:62.0px;height:33.0px;background:repeating-linear-gradient(180deg,#c6c6c6 0,#c6c6c6 0.80px,transparent 0.80px,transparent 2.40px);"></div><div class="a" style="left:20.0px;top:65.4px;width:44.0px;height:1.4px;background:repeating-linear-gradient(180deg,#b8b8b8 0,#b8b8b8 1.00px,transparent 1.00px,transparent 3.00px);"></div><div class="a" style="left:82.5px;top:41.4px;width:62.5px;height:35.0px;background:#f3f3f3;"></div><div class="a" style="left:89.6px;top:59.0px;width:4.0px;height:4.0px;background:#e8443a;border-radius:50%;"></div><div class="a" style="left:88.0px;top:63.4px;width:7.2px;height:9.6px;background:#e8443a;border-radius:2px 2px 0 0;"></div><div class="a" style="left:88.8px;top:73.0px;width:2.2px;height:4.6px;background:#e8443a;"></div><div class="a" style="left:92.2px;top:73.0px;width:2.2px;height:4.6px;background:#e8443a;"></div><div class="a" style="left:99.2px;top:59.0px;width:4.0px;height:4.0px;background:#f39c1f;border-radius:50%;"></div><div class="a" style="left:97.6px;top:63.4px;width:7.2px;height:9.6px;background:#f39c1f;border-radius:2px 2px 0 0;"></div><div class="a" style="left:98.4px;top:73.0px;width:2.2px;height:4.6px;background:#f39c1f;"></div><div class="a" style="left:101.8px;top:73.0px;width:2.2px;height:4.6px;background:#f39c1f;"></div><div class="a" style="left:108.8px;top:59.0px;width:4.0px;height:4.0px;background:#3a9ad9;border-radius:50%;"></div><div class="a" style="left:107.2px;top:63.4px;width:7.2px;height:9.6px;background:#3a9ad9;border-radius:2px 2px 0 0;"></div><div class="a" style="left:108.0px;top:73.0px;width:2.2px;height:4.6px;background:#3a9ad9;"></div><div class="a" style="left:111.4px;top:73.0px;width:2.2px;height:4.6px;background:#3a9ad9;"></div><div class="a" style="left:118.4px;top:59.0px;width:4.0px;height:4.0px;background:#f2c21a;border-radius:50%;"></div><div class="a" style="left:116.8px;top:63.4px;width:7.2px;height:9.6px;background:#f2c21a;border-radius:2px 2px 0 0;"></div><div class="a" style="left:117.6px;top:73.0px;width:2.2px;height:4.6px;background:#f2c21a;"></div><div class="a" style="left:121.0px;top:73.0px;width:2.2px;height:4.6px;background:#f2c21a;"></div><div class="a" style="left:128.0px;top:59.0px;width:4.0px;height:4.0px;background:#52b152;border-radius:50%;"></div><div class="a" style="left:126.4px;top:63.4px;width:7.2px;height:9.6px;background:#52b152;border-radius:2px 2px 0 0;"></div><div class="a" style="left:127.2px;top:73.0px;width:2.2px;height:4.6px;background:#52b152;"></div><div class="a" style="left:130.6px;top:73.0px;width:2.2px;height:4.6px;background:#52b152;"></div><div class="a" style="left:86.0px;top:45.0px;width:10.5px;height:8.6px;background:#e8443a;border-radius:50%;"></div><div class="a" style="left:96.0px;top:42.0px;width:10.5px;height:8.6px;background:#f39c1f;border-radius:50%;"></div><div class="a" style="left:108.0px;top:42.5px;width:10.5px;height:8.6px;background:#3a9ad9;border-radius:50%;"></div><div class="a" style="left:120.0px;top:42.0px;width:10.5px;height:8.6px;background:#f2c21a;border-radius:50%;"></div><div class="a" style="left:131.0px;top:44.0px;width:10.5px;height:8.6px;background:#52b152;border-radius:50%;"></div></div><div class="t" style='left:4.8px;top:126.3px;font-size:10.2px;color:#dedede;letter-spacing:-0.07px;font-weight:700;'>6</div>
<div class="a" style="left:19.0px;top:220.8px;width:147.3px;height:82.5px;background:#fff;border-radius:3px;overflow:hidden"><div class="a" style="left:3.0px;top:2.0px;width:35.0px;height:20.0px;background:#d9ecf5;"></div><div class="a" style="left:5.0px;top:12.0px;width:4.0px;height:9.0px;background:#e8443a;border-radius:1.5px 1.5px 0 0;"></div><div class="a" style="left:5.6px;top:8.4px;width:2.8px;height:2.8px;background:#e8443a;border-radius:50%;"></div><div class="a" style="left:10.4px;top:12.0px;width:4.0px;height:9.0px;background:#f39c1f;border-radius:1.5px 1.5px 0 0;"></div><div class="a" style="left:11.0px;top:8.4px;width:2.8px;height:2.8px;background:#f39c1f;border-radius:50%;"></div><div class="a" style="left:15.8px;top:12.0px;width:4.0px;height:9.0px;background:#3a9ad9;border-radius:1.5px 1.5px 0 0;"></div><div class="a" style="left:16.4px;top:8.4px;width:2.8px;height:2.8px;background:#3a9ad9;border-radius:50%;"></div><div class="a" style="left:21.2px;top:12.0px;width:4.0px;height:9.0px;background:#52b152;border-radius:1.5px 1.5px 0 0;"></div><div class="a" style="left:21.8px;top:8.4px;width:2.8px;height:2.8px;background:#52b152;border-radius:50%;"></div><div class="a" style="left:26.6px;top:12.0px;width:4.0px;height:9.0px;background:#9b59b6;border-radius:1.5px 1.5px 0 0;"></div><div class="a" style="left:27.2px;top:8.4px;width:2.8px;height:2.8px;background:#9b59b6;border-radius:50%;"></div><div class="a" style="left:32.0px;top:12.0px;width:4.0px;height:9.0px;background:#e67e22;border-radius:1.5px 1.5px 0 0;"></div><div class="a" style="left:32.6px;top:8.4px;width:2.8px;height:2.8px;background:#e67e22;border-radius:50%;"></div><div class="a" style="left:8.0px;top:4.0px;width:2.4px;height:2.4px;background:#f2c21a;border-radius:50%;"></div><div class="a" style="left:15.0px;top:3.0px;width:2.4px;height:2.4px;background:#52b152;border-radius:50%;"></div><div class="a" style="left:22.0px;top:5.0px;width:2.4px;height:2.4px;background:#3a9ad9;border-radius:50%;"></div><div class="a" style="left:29.0px;top:3.4px;width:2.4px;height:2.4px;background:#f39c1f;border-radius:50%;"></div><div class="a" style="left:74.0px;top:9.0px;width:20.0px;height:8.0px;background:#fff;border:0.5px solid #a0a0a0;"></div><div class="a" style="left:75.6px;top:10.4px;width:16.8px;height:6.0px;background:repeating-linear-gradient(180deg,#c8c8c8 0,#c8c8c8 0.60px,transparent 0.60px,transparent 1.60px);"></div><div class="a" style="left:97.0px;top:6.0px;width:14.0px;height:4.4px;background:#fff;border:0.5px solid #a0a0a0;"></div><div class="a" style="left:98.6px;top:7.4px;width:10.8px;height:2.4px;background:repeating-linear-gradient(180deg,#c8c8c8 0,#c8c8c8 0.60px,transparent 0.60px,transparent 1.60px);"></div><div class="a" style="left:97.0px;top:11.4px;width:14.0px;height:4.4px;background:#fff;border:0.5px solid #a0a0a0;"></div><div class="a" style="left:98.6px;top:12.8px;width:10.8px;height:2.4px;background:repeating-linear-gradient(180deg,#c8c8c8 0,#c8c8c8 0.60px,transparent 0.60px,transparent 1.60px);"></div><div class="a" style="left:97.0px;top:16.8px;width:14.0px;height:4.4px;background:#fff;border:0.5px solid #a0a0a0;"></div><div class="a" style="left:98.6px;top:18.2px;width:10.8px;height:2.4px;background:repeating-linear-gradient(180deg,#c8c8c8 0,#c8c8c8 0.60px,transparent 0.60px,transparent 1.60px);"></div><div class="a" style="left:79.0px;top:24.0px;width:18.0px;height:13.0px;background:#fff;border:0.5px solid #a0a0a0;"></div><div class="a" style="left:80.6px;top:25.4px;width:14.8px;height:11.0px;background:repeating-linear-gradient(180deg,#c8c8c8 0,#c8c8c8 0.60px,transparent 0.60px,transparent 1.60px);"></div><div class="a" style="left:101.0px;top:25.0px;width:12.0px;height:4.6px;background:#fff;border:0.5px solid #a0a0a0;"></div><div class="a" style="left:102.6px;top:26.4px;width:8.8px;height:2.6px;background:repeating-linear-gradient(180deg,#c8c8c8 0,#c8c8c8 0.60px,transparent 0.60px,transparent 1.60px);"></div><div class="a" style="left:101.0px;top:31.0px;width:12.0px;height:4.6px;background:#fff;border:0.5px solid #a0a0a0;"></div><div class="a" style="left:102.6px;top:32.4px;width:8.8px;height:2.6px;background:repeating-linear-gradient(180deg,#c8c8c8 0,#c8c8c8 0.60px,transparent 0.60px,transparent 1.60px);"></div><div class="a" style="left:101.0px;top:37.0px;width:12.0px;height:4.6px;background:#fff;border:0.5px solid #a0a0a0;"></div><div class="a" style="left:102.6px;top:38.4px;width:8.8px;height:2.6px;background:repeating-linear-gradient(180deg,#c8c8c8 0,#c8c8c8 0.60px,transparent 0.60px,transparent 1.60px);"></div><div class="a" style="left:114.0px;top:19.0px;width:13.0px;height:4.4px;background:#fff;border:0.5px solid #a0a0a0;"></div><div class="a" style="left:115.6px;top:20.4px;width:9.8px;height:2.4px;background:repeating-linear-gradient(180deg,#c8c8c8 0,#c8c8c8 0.60px,transparent 0.60px,transparent 1.60px);"></div><div class="a" style="left:114.0px;top:24.6px;width:13.0px;height:4.4px;background:#fff;border:0.5px solid #a0a0a0;"></div><div class="a" style="left:115.6px;top:26.0px;width:9.8px;height:2.4px;background:repeating-linear-gradient(180deg,#c8c8c8 0,#c8c8c8 0.60px,transparent 0.60px,transparent 1.60px);"></div><div class="a" style="left:114.0px;top:30.2px;width:13.0px;height:4.4px;background:#fff;border:0.5px solid #a0a0a0;"></div><div class="a" style="left:115.6px;top:31.6px;width:9.8px;height:2.4px;background:repeating-linear-gradient(180deg,#c8c8c8 0,#c8c8c8 0.60px,transparent 0.60px,transparent 1.60px);"></div><div class="a" style="left:74.0px;top:48.0px;width:20.0px;height:5.0px;background:#fff;border:0.5px solid #a0a0a0;"></div><div class="a" style="left:75.6px;top:49.4px;width:16.8px;height:3.0px;background:repeating-linear-gradient(180deg,#c8c8c8 0,#c8c8c8 0.60px,transparent 0.60px,transparent 1.60px);"></div><div class="a" style="left:97.0px;top:42.0px;width:14.0px;height:4.4px;background:#fff;border:0.5px solid #a0a0a0;"></div><div class="a" style="left:98.6px;top:43.4px;width:10.8px;height:2.4px;background:repeating-linear-gradient(180deg,#c8c8c8 0,#c8c8c8 0.60px,transparent 0.60px,transparent 1.60px);"></div><div class="a" style="left:97.0px;top:47.6px;width:14.0px;height:4.4px;background:#fff;border:0.5px solid #a0a0a0;"></div><div class="a" style="left:98.6px;top:49.0px;width:10.8px;height:2.4px;background:repeating-linear-gradient(180deg,#c8c8c8 0,#c8c8c8 0.60px,transparent 0.60px,transparent 1.60px);"></div><div class="a" style="left:94.0px;top:13.0px;width:3.0px;height:0.5px;background:#a0a0a0;"></div><div class="a" style="left:84.0px;top:17.0px;width:0.5px;height:7.0px;background:#a0a0a0;"></div><div class="a" style="left:97.0px;top:29.0px;width:4.0px;height:0.5px;background:#a0a0a0;"></div><div class="a" style="left:88.0px;top:37.0px;width:0.5px;height:11.0px;background:#a0a0a0;"></div><div class="a" style="left:111.0px;top:21.0px;width:3.0px;height:0.5px;background:#a0a0a0;"></div><div class="a" style="left:74.0px;top:57.6px;width:66.0px;height:3.6px;background:repeating-linear-gradient(180deg,#bdbdbd 0,#bdbdbd 0.80px,transparent 0.80px,transparent 2.20px);"></div><div class="a" style="left:10.0px;top:30.0px;width:50.0px;height:4.6px;background:repeating-linear-gradient(180deg,#9c9c9c 0,#9c9c9c 0.80px,transparent 0.80px,transparent 2.20px);"></div><div class="a" style="left:6.0px;top:36.0px;width:58.0px;height:40.6px;background:#fff;border:0.5px solid #a8a8a8;"></div><div class="a" style="left:14.0px;top:36.0px;width:0.5px;height:40.6px;background:#a8a8a8;"></div><div class="a" style="left:24.0px;top:36.0px;width:0.5px;height:40.6px;background:#a8a8a8;"></div><div class="a" style="left:6.0px;top:39.4px;width:58.0px;height:0.5px;background:#a8a8a8;"></div><div class="a" style="left:6.0px;top:53.0px;width:58.0px;height:0.5px;background:#a8a8a8;"></div><div class="a" style="left:6.0px;top:66.0px;width:58.0px;height:0.5px;background:#a8a8a8;"></div><div class="a" style="left:26.0px;top:40.6px;width:36.0px;height:35.0px;background:repeating-linear-gradient(180deg,#c6c6c6 0,#c6c6c6 0.70px,transparent 0.70px,transparent 1.55px);"></div><div class="a" style="left:15.0px;top:43.0px;width:8.0px;height:30.0px;background:repeating-linear-gradient(180deg,#d0d0d0 0,#d0d0d0 2.40px,transparent 2.40px,transparent 13.00px);"></div><svg style="left:130.0px;top:66.6px" width="12.6" height="14.8" viewBox="26 10 58 68"><use href="#mdpug"/></svg></div><div class="t" style='left:4.8px;top:222.0px;font-size:10.2px;color:#dedede;letter-spacing:-0.07px;font-weight:700;'>7</div>
<div class="a" style="left:16.4px;top:314.4px;width:152.7px;height:87.8px;border-radius:4px;background:#e4572e"></div><div class="a" style="left:19.0px;top:317.2px;width:147.3px;height:82.2px;background:#fff;border-radius:2px;overflow:hidden"><svg style="left:3.0px;top:1.6px" width="20.6" height="29.8" viewBox="6 8 112 162"><use href="#coatg"/></svg><div class="a" style="left:52.0px;top:10.6px;width:42.0px;height:1.2px;background:repeating-linear-gradient(180deg,#808080 0,#808080 1.20px,transparent 1.20px,transparent 3.00px);"></div><div class="a" style="left:135.0px;top:9.6px;width:8.0px;height:1.0px;background:repeating-linear-gradient(180deg,#a8a8a8 0,#a8a8a8 0.80px,transparent 0.80px,transparent 3.00px);"></div><div class="a" style="left:24.2px;top:13.6px;width:116.0px;height:48.6px;background:#fff;border:0.5px solid #9c9c9c;"></div><div class="a" style="left:24.2px;top:23.6px;width:116.0px;height:0.5px;background:#9c9c9c;"></div><div class="a" style="left:64.0px;top:17.8px;width:37.0px;height:1.6px;background:repeating-linear-gradient(180deg,#6a6a6a 0,#6a6a6a 1.50px,transparent 1.50px,transparent 3.00px);"></div><div class="a" style="left:26.4px;top:25.0px;width:8.5px;height:33.7px;background:repeating-linear-gradient(180deg,#bcbcbc 0,#bcbcbc 1.00px,transparent 1.00px,transparent 2.41px);"></div><div class="a" style="left:36.9px;top:23.6px;width:0.5px;height:38.6px;background:#9c9c9c;"></div><div class="a" style="left:39.1px;top:25.0px;width:8.6px;height:33.7px;background:repeating-linear-gradient(180deg,#bcbcbc 0,#bcbcbc 1.00px,transparent 1.00px,transparent 2.41px);"></div><div class="a" style="left:49.6px;top:23.6px;width:0.5px;height:38.6px;background:#9c9c9c;"></div><div class="a" style="left:51.8px;top:25.0px;width:9.8px;height:38.6px;background:repeating-linear-gradient(180deg,#bcbcbc 0,#bcbcbc 1.00px,transparent 1.00px,transparent 2.41px);"></div><div class="a" style="left:63.6px;top:23.6px;width:0.5px;height:38.6px;background:#9c9c9c;"></div><div class="a" style="left:65.8px;top:25.0px;width:8.6px;height:33.7px;background:repeating-linear-gradient(180deg,#bcbcbc 0,#bcbcbc 1.00px,transparent 1.00px,transparent 2.41px);"></div><div class="a" style="left:76.4px;top:23.6px;width:0.5px;height:38.6px;background:#9c9c9c;"></div><div class="a" style="left:78.6px;top:25.0px;width:8.9px;height:24.1px;background:repeating-linear-gradient(180deg,#bcbcbc 0,#bcbcbc 1.00px,transparent 1.00px,transparent 2.41px);"></div><div class="a" style="left:89.4px;top:23.6px;width:0.5px;height:38.6px;background:#9c9c9c;"></div><div class="a" style="left:91.6px;top:25.0px;width:8.5px;height:38.6px;background:repeating-linear-gradient(180deg,#bcbcbc 0,#bcbcbc 1.00px,transparent 1.00px,transparent 2.41px);"></div><div class="a" style="left:102.1px;top:23.6px;width:0.5px;height:38.6px;background:#9c9c9c;"></div><div class="a" style="left:104.3px;top:25.0px;width:6.9px;height:9.6px;background:repeating-linear-gradient(180deg,#bcbcbc 0,#bcbcbc 1.00px,transparent 1.00px,transparent 2.41px);"></div><div class="a" style="left:113.2px;top:23.6px;width:0.5px;height:38.6px;background:#9c9c9c;"></div><div class="a" style="left:115.4px;top:25.0px;width:8.6px;height:33.7px;background:repeating-linear-gradient(180deg,#bcbcbc 0,#bcbcbc 1.00px,transparent 1.00px,transparent 2.41px);"></div><div class="a" style="left:126.0px;top:23.6px;width:0.5px;height:38.6px;background:#9c9c9c;"></div><div class="a" style="left:128.2px;top:25.0px;width:10.1px;height:21.7px;background:repeating-linear-gradient(180deg,#bcbcbc 0,#bcbcbc 1.00px,transparent 1.00px,transparent 2.41px);"></div><svg style="left:130.4px;top:66.2px" width="12.8" height="15.0" viewBox="26 10 58 68"><use href="#mdpug"/></svg><svg style="left:95.4px;top:24px" width="8" height="13" viewBox="0 0 8 13"><path d="M0.6,0.6 V10 L2.8,8 L4.4,11.8 L6,11.2 L4.4,7.4 H7.4 Z" fill="#111" stroke="#fff" stroke-width=".7"/></svg></div><div class="t" style='left:4.8px;top:318.4px;font-size:10.2px;color:#dedede;letter-spacing:-0.07px;font-weight:700;'>8</div>
<div class="a" style="left:19.0px;top:412.6px;width:147.3px;height:60.0px;background:#fff;border-radius:3px 3px 0 0;overflow:hidden"><svg style="left:3.0px;top:1.4px" width="20.6" height="29.8" viewBox="6 8 112 162"><use href="#coatg"/></svg><div class="a" style="left:77.6px;top:3.4px;width:61.6px;height:3.4px;background:#cfcfd4;"></div><div class="a" style="left:82.0px;top:4.3px;width:52.0px;height:2.2px;background:repeating-linear-gradient(180deg,#9a93c4 0,#9a93c4 0.60px,transparent 0.60px,transparent 1.70px);"></div><div class="a" style="left:77.6px;top:7.4px;width:61.6px;height:5.6px;background:#c6bdf6;"></div><div class="a" style="left:82.0px;top:8.3px;width:52.0px;height:4.4px;background:repeating-linear-gradient(180deg,#9a93c4 0,#9a93c4 0.60px,transparent 0.60px,transparent 1.70px);"></div><div class="a" style="left:77.6px;top:14.0px;width:61.6px;height:3.4px;background:#d2d2d6;"></div><div class="a" style="left:82.0px;top:14.9px;width:52.0px;height:2.2px;background:repeating-linear-gradient(180deg,#9a93c4 0,#9a93c4 0.60px,transparent 0.60px,transparent 1.70px);"></div><div class="a" style="left:77.6px;top:18.4px;width:61.6px;height:14.6px;background:#c3b9f7;"></div><div class="a" style="left:82.0px;top:19.3px;width:52.0px;height:13.4px;background:repeating-linear-gradient(180deg,#9a93c4 0,#9a93c4 0.60px,transparent 0.60px,transparent 1.70px);"></div><div class="a" style="left:77.6px;top:34.0px;width:61.6px;height:2.6px;background:#d2d2d6;"></div><div class="a" style="left:82.0px;top:34.9px;width:52.0px;height:1.4px;background:repeating-linear-gradient(180deg,#9a93c4 0,#9a93c4 0.60px,transparent 0.60px,transparent 1.70px);"></div><div class="a" style="left:77.6px;top:37.4px;width:61.6px;height:5.0px;background:#c8c0f4;"></div><div class="a" style="left:82.0px;top:38.3px;width:52.0px;height:3.8px;background:repeating-linear-gradient(180deg,#9a93c4 0,#9a93c4 0.60px,transparent 0.60px,transparent 1.70px);"></div><div class="a" style="left:14.0px;top:33.4px;width:48.0px;height:3.4px;background:repeating-linear-gradient(180deg,#9c9c9c 0,#9c9c9c 0.80px,transparent 0.80px,transparent 2.00px);"></div><div class="a" style="left:6.0px;top:37.6px;width:62.0px;height:8.0px;background:#fff;border:0.5px solid #a8a8a8;"></div><div class="a" style="left:8.0px;top:39.0px;width:58.0px;height:6.0px;background:repeating-linear-gradient(180deg,#c6c6c6 0,#c6c6c6 0.70px,transparent 0.70px,transparent 1.70px);"></div></div><div class="t" style='left:4.8px;top:413.8px;font-size:10.2px;color:#dedede;letter-spacing:-0.07px;font-weight:700;'>9</div>
</div>
<div class="a" id="pdiv"></div><div class="a" id="main"></div>
<div class="a" id="slide">
<!-- slide content -->
<svg id="coat" style="left:0;top:1px" width="130" height="175" viewBox="0 0 130 175"><g id="coatg">
<path d="M11.5,98 L23,94 L24.5,116 L20,123.5 L17.5,118.5 L13,121.5 Z" fill="#1e66bd"/>
<path d="M115.5,98 L104,94 L102.5,116 L107,123.5 L109.5,118.5 L114,121.5 Z" fill="#1e66bd"/>
<path d="M23.5,109 Q63.5,138 103.5,109 L106,119.5 Q63.5,147.5 21,119.5 Z" fill="#1e66bd"/>
<path d="M31.2,29 C31.2,21 44,20.6 63.5,20.6 C83,20.6 95.8,21 95.8,29 Z" fill="#1e66bd"/>
<path d="M18,70 Q21,59 33,60 V68 Q26,67 22,76 Z" fill="#2b6fd6"/>
<path d="M20,77 Q25,66 33,66 V76 Q28,76 25,84 Z" fill="#f4e322"/>
<path d="M109,70 Q106,59 94,60 V68 Q101,67 105,76 Z" fill="#2b6fd6"/>
<path d="M107,77 Q102,66 94,66 V76 Q99,76 102,84 Z" fill="#f4e322"/>
<g stroke="#b48a14" stroke-width=".22">
<ellipse cx="26.4" cy="32.9" rx="3" ry="1.8" transform="rotate(165 26.4 32.9)" fill="#e4ba28"/>
<ellipse cx="26.5" cy="32" rx="3" ry="1.8" transform="rotate(105 26.5 32)" fill="#e8c030"/>
<ellipse cx="26.3" cy="35.7" rx="3" ry="1.8" transform="rotate(15 26.3 35.7)" fill="#d8a818"/>
<ellipse cx="24" cy="31.3" rx="3" ry="1.8" transform="rotate(120 24 31.3)" fill="#e2b41e"/>
<ellipse cx="25" cy="30.2" rx="3" ry="1.8" transform="rotate(45 25 30.2)" fill="#ecc83a"/>
<ellipse cx="21.5" cy="38.1" rx="3" ry="1.8" transform="rotate(90 21.5 38.1)" fill="#e8c030"/>
<ellipse cx="26.7" cy="32.2" rx="3" ry="1.8" transform="rotate(135 26.7 32.2)" fill="#d2a016"/>
<ellipse cx="22.9" cy="33.4" rx="3" ry="1.8" transform="rotate(0 22.9 33.4)" fill="#e8c030"/>
<ellipse cx="26.4" cy="40.7" rx="3" ry="1.8" transform="rotate(30 26.4 40.7)" fill="#e8c030"/>
<ellipse cx="20.8" cy="41.4" rx="3" ry="1.8" transform="rotate(120 20.8 41.4)" fill="#e4ba28"/>
<ellipse cx="24.3" cy="36.1" rx="3" ry="1.8" transform="rotate(165 24.3 36.1)" fill="#e8c030"/>
<ellipse cx="28" cy="42.4" rx="3" ry="1.8" transform="rotate(60 28 42.4)" fill="#e2b41e"/>
<ellipse cx="21" cy="37.5" rx="3" ry="1.8" transform="rotate(30 21 37.5)" fill="#d8a818"/>
<ellipse cx="17.4" cy="39.3" rx="3" ry="1.8" transform="rotate(135 17.4 39.3)" fill="#d2a016"/>
<ellipse cx="16.5" cy="43" rx="3" ry="1.8" transform="rotate(75 16.5 43)" fill="#e2b41e"/>
<ellipse cx="19.9" cy="44.9" rx="3" ry="1.8" transform="rotate(105 19.9 44.9)" fill="#e4ba28"/>
<ellipse cx="19.9" cy="43" rx="3" ry="1.8" transform="rotate(165 19.9 43)" fill="#e8c030"/>
<ellipse cx="17" cy="47.7" rx="3" ry="1.8" transform="rotate(0 17 47.7)" fill="#e4ba28"/>
<ellipse cx="20.4" cy="44" rx="3" ry="1.8" transform="rotate(120 20.4 44)" fill="#ecc83a"/>
<ellipse cx="20.5" cy="46.1" rx="3" ry="1.8" transform="rotate(0 20.5 46.1)" fill="#ecc83a"/>
<ellipse cx="16.9" cy="43.8" rx="3" ry="1.8" transform="rotate(45 16.9 43.8)" fill="#e2b41e"/>
<ellipse cx="24.9" cy="50.5" rx="3" ry="1.8" transform="rotate(105 24.9 50.5)" fill="#d8a818"/>
<ellipse cx="22.1" cy="51" rx="3" ry="1.8" transform="rotate(60 22.1 51)" fill="#ecc83a"/>
<ellipse cx="17.6" cy="50.6" rx="3" ry="1.8" transform="rotate(75 17.6 50.6)" fill="#d8a818"/>
<ellipse cx="16.8" cy="52.9" rx="3" ry="1.8" transform="rotate(15 16.8 52.9)" fill="#e8c030"/>
<ellipse cx="20.2" cy="51.1" rx="3" ry="1.8" transform="rotate(30 20.2 51.1)" fill="#d8a818"/>
<ellipse cx="19.5" cy="52.6" rx="3" ry="1.8" transform="rotate(15 19.5 52.6)" fill="#d8a818"/>
<ellipse cx="24.1" cy="50.3" rx="3" ry="1.8" transform="rotate(15 24.1 50.3)" fill="#e4ba28"/>
<ellipse cx="18.2" cy="54.1" rx="3" ry="1.8" transform="rotate(105 18.2 54.1)" fill="#e8c030"/>
<ellipse cx="24.8" cy="50.1" rx="3" ry="1.8" transform="rotate(135 24.8 50.1)" fill="#d2a016"/>
<ellipse cx="27.2" cy="50.4" rx="3" ry="1.8" transform="rotate(165 27.2 50.4)" fill="#d2a016"/>
<ellipse cx="20.9" cy="52.9" rx="3" ry="1.8" transform="rotate(150 20.9 52.9)" fill="#ecc83a"/>
<ellipse cx="18.8" cy="59.4" rx="3" ry="1.8" transform="rotate(150 18.8 59.4)" fill="#e2b41e"/>
<ellipse cx="26.4" cy="55.1" rx="3" ry="1.8" transform="rotate(45 26.4 55.1)" fill="#e8c030"/>
<ellipse cx="28.5" cy="57.7" rx="3" ry="1.8" transform="rotate(30 28.5 57.7)" fill="#e4ba28"/>
<ellipse cx="27.8" cy="57.3" rx="3" ry="1.8" transform="rotate(30 27.8 57.3)" fill="#ecc83a"/>
<ellipse cx="22.1" cy="55.2" rx="3" ry="1.8" transform="rotate(90 22.1 55.2)" fill="#d8a818"/>
<ellipse cx="19.6" cy="62.8" rx="3" ry="1.8" transform="rotate(135 19.6 62.8)" fill="#e8c030"/>
<ellipse cx="29.2" cy="59.9" rx="3" ry="1.8" transform="rotate(105 29.2 59.9)" fill="#e4ba28"/>
<ellipse cx="26.6" cy="60.8" rx="3" ry="1.8" transform="rotate(60 26.6 60.8)" fill="#ecc83a"/>
<ellipse cx="100.9" cy="28.2" rx="3" ry="1.8" transform="rotate(90 100.9 28.2)" fill="#d2a016"/>
<ellipse cx="107.4" cy="32.8" rx="3" ry="1.8" transform="rotate(105 107.4 32.8)" fill="#d8a818"/>
<ellipse cx="98.8" cy="32.5" rx="3" ry="1.8" transform="rotate(120 98.8 32.5)" fill="#d2a016"/>
<ellipse cx="106.7" cy="32.2" rx="3" ry="1.8" transform="rotate(75 106.7 32.2)" fill="#e4ba28"/>
<ellipse cx="103.8" cy="30.4" rx="3" ry="1.8" transform="rotate(60 103.8 30.4)" fill="#d8a818"/>
<ellipse cx="103.7" cy="36.1" rx="3" ry="1.8" transform="rotate(105 103.7 36.1)" fill="#d8a818"/>
<ellipse cx="106.3" cy="37" rx="3" ry="1.8" transform="rotate(60 106.3 37)" fill="#d8a818"/>
<ellipse cx="105.1" cy="36.9" rx="3" ry="1.8" transform="rotate(0 105.1 36.9)" fill="#ecc83a"/>
<ellipse cx="104.2" cy="35.1" rx="3" ry="1.8" transform="rotate(150 104.2 35.1)" fill="#d8a818"/>
<ellipse cx="103.4" cy="40.3" rx="3" ry="1.8" transform="rotate(150 103.4 40.3)" fill="#e4ba28"/>
<ellipse cx="107.4" cy="37.4" rx="3" ry="1.8" transform="rotate(150 107.4 37.4)" fill="#d8a818"/>
<ellipse cx="106.9" cy="41.9" rx="3" ry="1.8" transform="rotate(75 106.9 41.9)" fill="#e8c030"/>
<ellipse cx="108.6" cy="41.6" rx="3" ry="1.8" transform="rotate(75 108.6 41.6)" fill="#d8a818"/>
<ellipse cx="104.9" cy="41.1" rx="3" ry="1.8" transform="rotate(30 104.9 41.1)" fill="#e8c030"/>
<ellipse cx="108.7" cy="45" rx="3" ry="1.8" transform="rotate(105 108.7 45)" fill="#d8a818"/>
<ellipse cx="107.1" cy="44.1" rx="3" ry="1.8" transform="rotate(165 107.1 44.1)" fill="#ecc83a"/>
<ellipse cx="101.3" cy="45.4" rx="3" ry="1.8" transform="rotate(135 101.3 45.4)" fill="#d2a016"/>
<ellipse cx="106.9" cy="43.3" rx="3" ry="1.8" transform="rotate(135 106.9 43.3)" fill="#d2a016"/>
<ellipse cx="108.1" cy="45.8" rx="3" ry="1.8" transform="rotate(165 108.1 45.8)" fill="#e2b41e"/>
<ellipse cx="101.6" cy="46.2" rx="3" ry="1.8" transform="rotate(135 101.6 46.2)" fill="#e4ba28"/>
<ellipse cx="101.4" cy="48.3" rx="3" ry="1.8" transform="rotate(30 101.4 48.3)" fill="#e4ba28"/>
<ellipse cx="107.4" cy="50.9" rx="3" ry="1.8" transform="rotate(45 107.4 50.9)" fill="#e8c030"/>
<ellipse cx="100" cy="45" rx="3" ry="1.8" transform="rotate(75 100 45)" fill="#e8c030"/>
<ellipse cx="104.8" cy="49" rx="3" ry="1.8" transform="rotate(90 104.8 49)" fill="#ecc83a"/>
<ellipse cx="103.3" cy="50.7" rx="3" ry="1.8" transform="rotate(15 103.3 50.7)" fill="#d2a016"/>
<ellipse cx="101.7" cy="51.9" rx="3" ry="1.8" transform="rotate(75 101.7 51.9)" fill="#e2b41e"/>
<ellipse cx="103.3" cy="54.6" rx="3" ry="1.8" transform="rotate(90 103.3 54.6)" fill="#e2b41e"/>
<ellipse cx="107.1" cy="52.2" rx="3" ry="1.8" transform="rotate(0 107.1 52.2)" fill="#d2a016"/>
<ellipse cx="106.1" cy="49.4" rx="3" ry="1.8" transform="rotate(120 106.1 49.4)" fill="#d2a016"/>
<ellipse cx="102.9" cy="54" rx="3" ry="1.8" transform="rotate(75 102.9 54)" fill="#e8c030"/>
<ellipse cx="103.6" cy="56.6" rx="3" ry="1.8" transform="rotate(150 103.6 56.6)" fill="#d2a016"/>
<ellipse cx="102.9" cy="52.1" rx="3" ry="1.8" transform="rotate(135 102.9 52.1)" fill="#ecc83a"/>
<ellipse cx="104.9" cy="59.2" rx="3" ry="1.8" transform="rotate(30 104.9 59.2)" fill="#d2a016"/>
<ellipse cx="99.4" cy="58.9" rx="3" ry="1.8" transform="rotate(150 99.4 58.9)" fill="#e2b41e"/>
<ellipse cx="102.5" cy="55.8" rx="3" ry="1.8" transform="rotate(135 102.5 55.8)" fill="#d2a016"/>
<ellipse cx="99.7" cy="58.9" rx="3" ry="1.8" transform="rotate(135 99.7 58.9)" fill="#ecc83a"/>
<ellipse cx="102.7" cy="62.4" rx="3" ry="1.8" transform="rotate(105 102.7 62.4)" fill="#d8a818"/>
<ellipse cx="103.1" cy="61.1" rx="3" ry="1.8" transform="rotate(90 103.1 61.1)" fill="#e8c030"/>
<ellipse cx="104.2" cy="58.4" rx="3" ry="1.8" transform="rotate(60 104.2 58.4)" fill="#ecc83a"/>
<ellipse cx="100.2" cy="57.2" rx="3" ry="1.8" transform="rotate(60 100.2 57.2)" fill="#ecc83a"/>
<ellipse cx="30" cy="67.8" rx="3" ry="1.8" transform="rotate(0 30 67.8)" fill="#e2b41e"/>
<ellipse cx="26.9" cy="74.9" rx="3" ry="1.8" transform="rotate(45 26.9 74.9)" fill="#d8a818"/>
<ellipse cx="20" cy="69.2" rx="3" ry="1.8" transform="rotate(90 20 69.2)" fill="#e2b41e"/>
<ellipse cx="24.9" cy="73.2" rx="3" ry="1.8" transform="rotate(45 24.9 73.2)" fill="#ecc83a"/>
<ellipse cx="28.3" cy="71.4" rx="3" ry="1.8" transform="rotate(60 28.3 71.4)" fill="#e8c030"/>
<ellipse cx="27.6" cy="72.4" rx="3" ry="1.8" transform="rotate(105 27.6 72.4)" fill="#d2a016"/>
<ellipse cx="30.7" cy="74.9" rx="3" ry="1.8" transform="rotate(135 30.7 74.9)" fill="#e4ba28"/>
<ellipse cx="29.6" cy="71.6" rx="3" ry="1.8" transform="rotate(30 29.6 71.6)" fill="#d8a818"/>
<ellipse cx="22.7" cy="77.7" rx="3" ry="1.8" transform="rotate(135 22.7 77.7)" fill="#d8a818"/>
<ellipse cx="27.7" cy="73" rx="3" ry="1.8" transform="rotate(75 27.7 73)" fill="#d8a818"/>
<ellipse cx="27.2" cy="79.9" rx="3" ry="1.8" transform="rotate(30 27.2 79.9)" fill="#e2b41e"/>
<ellipse cx="19.7" cy="78.5" rx="3" ry="1.8" transform="rotate(150 19.7 78.5)" fill="#e2b41e"/>
<ellipse cx="29.7" cy="79.1" rx="3" ry="1.8" transform="rotate(0 29.7 79.1)" fill="#ecc83a"/>
<ellipse cx="28.6" cy="78.9" rx="3" ry="1.8" transform="rotate(135 28.6 78.9)" fill="#e4ba28"/>
<ellipse cx="28" cy="81.1" rx="3" ry="1.8" transform="rotate(105 28 81.1)" fill="#ecc83a"/>
<ellipse cx="25.5" cy="82.2" rx="3" ry="1.8" transform="rotate(165 25.5 82.2)" fill="#e8c030"/>
<ellipse cx="30.3" cy="81.2" rx="3" ry="1.8" transform="rotate(15 30.3 81.2)" fill="#d8a818"/>
<ellipse cx="29.8" cy="83.6" rx="3" ry="1.8" transform="rotate(90 29.8 83.6)" fill="#d2a016"/>
<ellipse cx="23.7" cy="85" rx="3" ry="1.8" transform="rotate(60 23.7 85)" fill="#e8c030"/>
<ellipse cx="22.5" cy="85" rx="3" ry="1.8" transform="rotate(105 22.5 85)" fill="#d8a818"/>
<ellipse cx="26.8" cy="83.5" rx="3" ry="1.8" transform="rotate(120 26.8 83.5)" fill="#e2b41e"/>
<ellipse cx="21.8" cy="82.6" rx="3" ry="1.8" transform="rotate(15 21.8 82.6)" fill="#e2b41e"/>
<ellipse cx="28.7" cy="81.7" rx="3" ry="1.8" transform="rotate(165 28.7 81.7)" fill="#ecc83a"/>
<ellipse cx="32.4" cy="89.9" rx="3" ry="1.8" transform="rotate(165 32.4 89.9)" fill="#ecc83a"/>
<ellipse cx="22.2" cy="89.3" rx="3" ry="1.8" transform="rotate(45 22.2 89.3)" fill="#d2a016"/>
<ellipse cx="29.2" cy="90.8" rx="3" ry="1.8" transform="rotate(165 29.2 90.8)" fill="#e8c030"/>
<ellipse cx="33.3" cy="89.5" rx="3" ry="1.8" transform="rotate(105 33.3 89.5)" fill="#e8c030"/>
<ellipse cx="24.4" cy="86.1" rx="3" ry="1.8" transform="rotate(30 24.4 86.1)" fill="#e2b41e"/>
<ellipse cx="29.6" cy="85.6" rx="3" ry="1.8" transform="rotate(15 29.6 85.6)" fill="#e4ba28"/>
<ellipse cx="27.1" cy="86.5" rx="3" ry="1.8" transform="rotate(0 27.1 86.5)" fill="#d2a016"/>
<ellipse cx="29.6" cy="92.4" rx="3" ry="1.8" transform="rotate(135 29.6 92.4)" fill="#e8c030"/>
<ellipse cx="23.6" cy="87.9" rx="3" ry="1.8" transform="rotate(150 23.6 87.9)" fill="#d2a016"/>
<ellipse cx="29.3" cy="90.5" rx="3" ry="1.8" transform="rotate(150 29.3 90.5)" fill="#d8a818"/>
<ellipse cx="34.4" cy="89.4" rx="3" ry="1.8" transform="rotate(60 34.4 89.4)" fill="#e8c030"/>
<ellipse cx="30.8" cy="94.2" rx="3" ry="1.8" transform="rotate(60 30.8 94.2)" fill="#d2a016"/>
<ellipse cx="31" cy="91.2" rx="3" ry="1.8" transform="rotate(15 31 91.2)" fill="#d2a016"/>
<ellipse cx="27.8" cy="96.6" rx="3" ry="1.8" transform="rotate(60 27.8 96.6)" fill="#d2a016"/>
<ellipse cx="36.4" cy="97" rx="3" ry="1.8" transform="rotate(75 36.4 97)" fill="#ecc83a"/>
<ellipse cx="34.1" cy="92.7" rx="3" ry="1.8" transform="rotate(165 34.1 92.7)" fill="#e2b41e"/>
<ellipse cx="33.5" cy="92.5" rx="3" ry="1.8" transform="rotate(150 33.5 92.5)" fill="#e2b41e"/>
<ellipse cx="27.6" cy="93.4" rx="3" ry="1.8" transform="rotate(135 27.6 93.4)" fill="#ecc83a"/>
<ellipse cx="29.7" cy="99.8" rx="3" ry="1.8" transform="rotate(105 29.7 99.8)" fill="#d8a818"/>
<ellipse cx="28.6" cy="97.6" rx="3" ry="1.8" transform="rotate(120 28.6 97.6)" fill="#e4ba28"/>
<ellipse cx="32.2" cy="100.6" rx="3" ry="1.8" transform="rotate(90 32.2 100.6)" fill="#e4ba28"/>
<ellipse cx="37.2" cy="100.4" rx="3" ry="1.8" transform="rotate(15 37.2 100.4)" fill="#e4ba28"/>
<ellipse cx="34.2" cy="96.7" rx="3" ry="1.8" transform="rotate(165 34.2 96.7)" fill="#d2a016"/>
<ellipse cx="33.4" cy="102.1" rx="3" ry="1.8" transform="rotate(60 33.4 102.1)" fill="#d8a818"/>
<ellipse cx="40" cy="101.6" rx="3" ry="1.8" transform="rotate(90 40 101.6)" fill="#ecc83a"/>
<ellipse cx="31.6" cy="103.1" rx="3" ry="1.8" transform="rotate(150 31.6 103.1)" fill="#d8a818"/>
<ellipse cx="39.5" cy="100.5" rx="3" ry="1.8" transform="rotate(75 39.5 100.5)" fill="#d2a016"/>
<ellipse cx="31.4" cy="105.3" rx="3" ry="1.8" transform="rotate(45 31.4 105.3)" fill="#e4ba28"/>
<ellipse cx="33.5" cy="98.5" rx="3" ry="1.8" transform="rotate(0 33.5 98.5)" fill="#e2b41e"/>
<ellipse cx="34.1" cy="100" rx="3" ry="1.8" transform="rotate(105 34.1 100)" fill="#ecc83a"/>
<ellipse cx="39.9" cy="101.6" rx="3" ry="1.8" transform="rotate(90 39.9 101.6)" fill="#ecc83a"/>
<ellipse cx="36.4" cy="106.6" rx="3" ry="1.8" transform="rotate(90 36.4 106.6)" fill="#d8a818"/>
<ellipse cx="38.8" cy="100.5" rx="3" ry="1.8" transform="rotate(30 38.8 100.5)" fill="#e4ba28"/>
<ellipse cx="35.9" cy="103.1" rx="3" ry="1.8" transform="rotate(90 35.9 103.1)" fill="#ecc83a"/>
<ellipse cx="36.3" cy="102.6" rx="3" ry="1.8" transform="rotate(60 36.3 102.6)" fill="#e8c030"/>
<ellipse cx="43.5" cy="106.3" rx="3" ry="1.8" transform="rotate(0 43.5 106.3)" fill="#ecc83a"/>
<ellipse cx="45.7" cy="104.2" rx="3" ry="1.8" transform="rotate(75 45.7 104.2)" fill="#d8a818"/>
<ellipse cx="46.7" cy="107.2" rx="3" ry="1.8" transform="rotate(150 46.7 107.2)" fill="#ecc83a"/>
<ellipse cx="42.1" cy="109.6" rx="3" ry="1.8" transform="rotate(15 42.1 109.6)" fill="#e4ba28"/>
<ellipse cx="41" cy="106.1" rx="3" ry="1.8" transform="rotate(45 41 106.1)" fill="#e4ba28"/>
<ellipse cx="49.1" cy="103.1" rx="3" ry="1.8" transform="rotate(165 49.1 103.1)" fill="#e2b41e"/>
<ellipse cx="45" cy="108.3" rx="3" ry="1.8" transform="rotate(135 45 108.3)" fill="#ecc83a"/>
<ellipse cx="49.4" cy="109.1" rx="3" ry="1.8" transform="rotate(150 49.4 109.1)" fill="#d8a818"/>
<ellipse cx="41.8" cy="106.7" rx="3" ry="1.8" transform="rotate(15 41.8 106.7)" fill="#e4ba28"/>
<ellipse cx="51.5" cy="107.9" rx="3" ry="1.8" transform="rotate(45 51.5 107.9)" fill="#e8c030"/>
<ellipse cx="48.4" cy="111.9" rx="3" ry="1.8" transform="rotate(150 48.4 111.9)" fill="#d2a016"/>
<ellipse cx="46.3" cy="112.5" rx="3" ry="1.8" transform="rotate(0 46.3 112.5)" fill="#ecc83a"/>
<ellipse cx="42.8" cy="111.3" rx="3" ry="1.8" transform="rotate(90 42.8 111.3)" fill="#e8c030"/>
<ellipse cx="43.3" cy="109.7" rx="3" ry="1.8" transform="rotate(120 43.3 109.7)" fill="#d2a016"/>
<ellipse cx="47.3" cy="106.4" rx="3" ry="1.8" transform="rotate(15 47.3 106.4)" fill="#e8c030"/>
<ellipse cx="54.1" cy="109.7" rx="3" ry="1.8" transform="rotate(105 54.1 109.7)" fill="#e2b41e"/>
<ellipse cx="52.3" cy="111.1" rx="3" ry="1.8" transform="rotate(105 52.3 111.1)" fill="#ecc83a"/>
<ellipse cx="54.1" cy="106.7" rx="3" ry="1.8" transform="rotate(90 54.1 106.7)" fill="#ecc83a"/>
<ellipse cx="49.4" cy="106.9" rx="3" ry="1.8" transform="rotate(0 49.4 106.9)" fill="#e8c030"/>
<ellipse cx="48.6" cy="110.8" rx="3" ry="1.8" transform="rotate(90 48.6 110.8)" fill="#e8c030"/>
<ellipse cx="53.2" cy="107.7" rx="3" ry="1.8" transform="rotate(75 53.2 107.7)" fill="#e2b41e"/>
<ellipse cx="48.8" cy="115" rx="3" ry="1.8" transform="rotate(30 48.8 115)" fill="#d2a016"/>
<ellipse cx="49.4" cy="113.1" rx="3" ry="1.8" transform="rotate(135 49.4 113.1)" fill="#e2b41e"/>
<ellipse cx="54.1" cy="110.3" rx="3" ry="1.8" transform="rotate(90 54.1 110.3)" fill="#d2a016"/>
<ellipse cx="58.5" cy="111.7" rx="3" ry="1.8" transform="rotate(30 58.5 111.7)" fill="#e4ba28"/>
<ellipse cx="50.7" cy="113.7" rx="3" ry="1.8" transform="rotate(165 50.7 113.7)" fill="#ecc83a"/>
<ellipse cx="61.2" cy="115.7" rx="3" ry="1.8" transform="rotate(120 61.2 115.7)" fill="#e2b41e"/>
<ellipse cx="53.4" cy="111.8" rx="3" ry="1.8" transform="rotate(60 53.4 111.8)" fill="#ecc83a"/>
<ellipse cx="56" cy="109.1" rx="3" ry="1.8" transform="rotate(15 56 109.1)" fill="#ecc83a"/>
<ellipse cx="56" cy="108.9" rx="3" ry="1.8" transform="rotate(90 56 108.9)" fill="#d2a016"/>
<ellipse cx="61.3" cy="110.5" rx="3" ry="1.8" transform="rotate(105 61.3 110.5)" fill="#e4ba28"/>
<ellipse cx="57.3" cy="113.9" rx="3" ry="1.8" transform="rotate(60 57.3 113.9)" fill="#d8a818"/>
<ellipse cx="106.2" cy="67.3" rx="3" ry="1.8" transform="rotate(75 106.2 67.3)" fill="#ecc83a"/>
<ellipse cx="104.7" cy="71.8" rx="3" ry="1.8" transform="rotate(60 104.7 71.8)" fill="#e4ba28"/>
<ellipse cx="106.8" cy="69.1" rx="3" ry="1.8" transform="rotate(0 106.8 69.1)" fill="#ecc83a"/>
<ellipse cx="97.9" cy="74.2" rx="3" ry="1.8" transform="rotate(0 97.9 74.2)" fill="#e4ba28"/>
<ellipse cx="96.8" cy="72.8" rx="3" ry="1.8" transform="rotate(15 96.8 72.8)" fill="#ecc83a"/>
<ellipse cx="102.5" cy="72.6" rx="3" ry="1.8" transform="rotate(60 102.5 72.6)" fill="#e8c030"/>
<ellipse cx="97.8" cy="74.7" rx="3" ry="1.8" transform="rotate(75 97.8 74.7)" fill="#d8a818"/>
<ellipse cx="96.6" cy="75.7" rx="3" ry="1.8" transform="rotate(165 96.6 75.7)" fill="#d2a016"/>
<ellipse cx="96.6" cy="73.1" rx="3" ry="1.8" transform="rotate(30 96.6 73.1)" fill="#d8a818"/>
<ellipse cx="101.1" cy="74.9" rx="3" ry="1.8" transform="rotate(135 101.1 74.9)" fill="#e2b41e"/>
<ellipse cx="98.8" cy="76.9" rx="3" ry="1.8" transform="rotate(75 98.8 76.9)" fill="#e8c030"/>
<ellipse cx="99.8" cy="74.3" rx="3" ry="1.8" transform="rotate(135 99.8 74.3)" fill="#d2a016"/>
<ellipse cx="105.3" cy="80.5" rx="3" ry="1.8" transform="rotate(15 105.3 80.5)" fill="#d8a818"/>
<ellipse cx="101.8" cy="76.9" rx="3" ry="1.8" transform="rotate(165 101.8 76.9)" fill="#e8c030"/>
<ellipse cx="100.8" cy="83.5" rx="3" ry="1.8" transform="rotate(90 100.8 83.5)" fill="#e2b41e"/>
<ellipse cx="99.4" cy="80.3" rx="3" ry="1.8" transform="rotate(45 99.4 80.3)" fill="#ecc83a"/>
<ellipse cx="102.2" cy="78.9" rx="3" ry="1.8" transform="rotate(0 102.2 78.9)" fill="#e4ba28"/>
<ellipse cx="105.9" cy="82.4" rx="3" ry="1.8" transform="rotate(105 105.9 82.4)" fill="#d2a016"/>
<ellipse cx="95.3" cy="79.9" rx="3" ry="1.8" transform="rotate(90 95.3 79.9)" fill="#e4ba28"/>
<ellipse cx="95.8" cy="87.2" rx="3" ry="1.8" transform="rotate(0 95.8 87.2)" fill="#d2a016"/>
<ellipse cx="97.7" cy="85.7" rx="3" ry="1.8" transform="rotate(75 97.7 85.7)" fill="#ecc83a"/>
<ellipse cx="100" cy="82.4" rx="3" ry="1.8" transform="rotate(45 100 82.4)" fill="#d8a818"/>
<ellipse cx="100.9" cy="84.3" rx="3" ry="1.8" transform="rotate(45 100.9 84.3)" fill="#d8a818"/>
<ellipse cx="98.3" cy="84" rx="3" ry="1.8" transform="rotate(150 98.3 84)" fill="#e2b41e"/>
<ellipse cx="101" cy="85.9" rx="3" ry="1.8" transform="rotate(30 101 85.9)" fill="#e8c030"/>
<ellipse cx="103.2" cy="87.2" rx="3" ry="1.8" transform="rotate(0 103.2 87.2)" fill="#e2b41e"/>
<ellipse cx="95.5" cy="84.8" rx="3" ry="1.8" transform="rotate(165 95.5 84.8)" fill="#d8a818"/>
<ellipse cx="103.5" cy="86.2" rx="3" ry="1.8" transform="rotate(75 103.5 86.2)" fill="#ecc83a"/>
<ellipse cx="100.8" cy="92.1" rx="3" ry="1.8" transform="rotate(135 100.8 92.1)" fill="#e2b41e"/>
<ellipse cx="101.9" cy="88.9" rx="3" ry="1.8" transform="rotate(0 101.9 88.9)" fill="#e2b41e"/>
<ellipse cx="98.4" cy="91.1" rx="3" ry="1.8" transform="rotate(30 98.4 91.1)" fill="#ecc83a"/>
<ellipse cx="92.6" cy="92.4" rx="3" ry="1.8" transform="rotate(135 92.6 92.4)" fill="#d8a818"/>
<ellipse cx="97.8" cy="91.7" rx="3" ry="1.8" transform="rotate(120 97.8 91.7)" fill="#e4ba28"/>
<ellipse cx="99.4" cy="91.8" rx="3" ry="1.8" transform="rotate(135 99.4 91.8)" fill="#e4ba28"/>
<ellipse cx="97.6" cy="89.4" rx="3" ry="1.8" transform="rotate(30 97.6 89.4)" fill="#ecc83a"/>
<ellipse cx="95" cy="94.1" rx="3" ry="1.8" transform="rotate(150 95 94.1)" fill="#d2a016"/>
<ellipse cx="93" cy="92.3" rx="3" ry="1.8" transform="rotate(0 93 92.3)" fill="#e2b41e"/>
<ellipse cx="99" cy="95.4" rx="3" ry="1.8" transform="rotate(165 99 95.4)" fill="#ecc83a"/>
<ellipse cx="93.4" cy="98.5" rx="3" ry="1.8" transform="rotate(60 93.4 98.5)" fill="#e4ba28"/>
<ellipse cx="92.3" cy="92.1" rx="3" ry="1.8" transform="rotate(15 92.3 92.1)" fill="#e4ba28"/>
<ellipse cx="100" cy="94.8" rx="3" ry="1.8" transform="rotate(75 100 94.8)" fill="#e4ba28"/>
<ellipse cx="97.8" cy="100.2" rx="3" ry="1.8" transform="rotate(135 97.8 100.2)" fill="#d2a016"/>
<ellipse cx="94.7" cy="97.2" rx="3" ry="1.8" transform="rotate(15 94.7 97.2)" fill="#e2b41e"/>
<ellipse cx="90.6" cy="101.6" rx="3" ry="1.8" transform="rotate(120 90.6 101.6)" fill="#ecc83a"/>
<ellipse cx="91.9" cy="94.5" rx="3" ry="1.8" transform="rotate(90 91.9 94.5)" fill="#ecc83a"/>
<ellipse cx="89.1" cy="100.1" rx="3" ry="1.8" transform="rotate(45 89.1 100.1)" fill="#e4ba28"/>
<ellipse cx="93.5" cy="98.5" rx="3" ry="1.8" transform="rotate(15 93.5 98.5)" fill="#e4ba28"/>
<ellipse cx="96.1" cy="101.4" rx="3" ry="1.8" transform="rotate(75 96.1 101.4)" fill="#e8c030"/>
<ellipse cx="95.7" cy="98.2" rx="3" ry="1.8" transform="rotate(60 95.7 98.2)" fill="#d8a818"/>
<ellipse cx="94.2" cy="97.7" rx="3" ry="1.8" transform="rotate(30 94.2 97.7)" fill="#e2b41e"/>
<ellipse cx="91.9" cy="103.6" rx="3" ry="1.8" transform="rotate(45 91.9 103.6)" fill="#e4ba28"/>
<ellipse cx="85" cy="102.4" rx="3" ry="1.8" transform="rotate(150 85 102.4)" fill="#d2a016"/>
<ellipse cx="91.9" cy="101.7" rx="3" ry="1.8" transform="rotate(90 91.9 101.7)" fill="#ecc83a"/>
<ellipse cx="89.2" cy="105.9" rx="3" ry="1.8" transform="rotate(60 89.2 105.9)" fill="#ecc83a"/>
<ellipse cx="85.9" cy="104" rx="3" ry="1.8" transform="rotate(75 85.9 104)" fill="#e8c030"/>
<ellipse cx="87" cy="100.9" rx="3" ry="1.8" transform="rotate(60 87 100.9)" fill="#d2a016"/>
<ellipse cx="87.9" cy="104.6" rx="3" ry="1.8" transform="rotate(90 87.9 104.6)" fill="#e8c030"/>
<ellipse cx="84.8" cy="101.4" rx="3" ry="1.8" transform="rotate(165 84.8 101.4)" fill="#d8a818"/>
<ellipse cx="88.8" cy="101.5" rx="3" ry="1.8" transform="rotate(105 88.8 101.5)" fill="#e8c030"/>
<ellipse cx="89.5" cy="109" rx="3" ry="1.8" transform="rotate(75 89.5 109)" fill="#e8c030"/>
<ellipse cx="89.1" cy="106.9" rx="3" ry="1.8" transform="rotate(45 89.1 106.9)" fill="#e4ba28"/>
<ellipse cx="85.9" cy="108.4" rx="3" ry="1.8" transform="rotate(15 85.9 108.4)" fill="#e2b41e"/>
<ellipse cx="80.6" cy="103.8" rx="3" ry="1.8" transform="rotate(15 80.6 103.8)" fill="#d8a818"/>
<ellipse cx="79.5" cy="107.7" rx="3" ry="1.8" transform="rotate(15 79.5 107.7)" fill="#d2a016"/>
<ellipse cx="85.7" cy="109" rx="3" ry="1.8" transform="rotate(30 85.7 109)" fill="#e4ba28"/>
<ellipse cx="86.7" cy="107.8" rx="3" ry="1.8" transform="rotate(135 86.7 107.8)" fill="#e4ba28"/>
<ellipse cx="85.8" cy="110.7" rx="3" ry="1.8" transform="rotate(75 85.8 110.7)" fill="#e2b41e"/>
<ellipse cx="84.6" cy="105.8" rx="3" ry="1.8" transform="rotate(75 84.6 105.8)" fill="#d8a818"/>
<ellipse cx="76.8" cy="111.5" rx="3" ry="1.8" transform="rotate(165 76.8 111.5)" fill="#e2b41e"/>
<ellipse cx="77.1" cy="112.3" rx="3" ry="1.8" transform="rotate(105 77.1 112.3)" fill="#ecc83a"/>
<ellipse cx="73.7" cy="112.8" rx="3" ry="1.8" transform="rotate(75 73.7 112.8)" fill="#e8c030"/>
<ellipse cx="80.7" cy="109.3" rx="3" ry="1.8" transform="rotate(75 80.7 109.3)" fill="#e4ba28"/>
<ellipse cx="73.2" cy="111.6" rx="3" ry="1.8" transform="rotate(165 73.2 111.6)" fill="#e4ba28"/>
<ellipse cx="75.1" cy="106.8" rx="3" ry="1.8" transform="rotate(105 75.1 106.8)" fill="#d8a818"/>
<ellipse cx="79.5" cy="107.6" rx="3" ry="1.8" transform="rotate(75 79.5 107.6)" fill="#ecc83a"/>
<ellipse cx="72.1" cy="113.4" rx="3" ry="1.8" transform="rotate(150 72.1 113.4)" fill="#e4ba28"/>
<ellipse cx="78.4" cy="107.2" rx="3" ry="1.8" transform="rotate(15 78.4 107.2)" fill="#d8a818"/>
<ellipse cx="73.8" cy="114.2" rx="3" ry="1.8" transform="rotate(15 73.8 114.2)" fill="#d2a016"/>
<ellipse cx="73.4" cy="108.7" rx="3" ry="1.8" transform="rotate(45 73.4 108.7)" fill="#d8a818"/>
<ellipse cx="75.4" cy="107.8" rx="3" ry="1.8" transform="rotate(60 75.4 107.8)" fill="#e2b41e"/>
<ellipse cx="73.5" cy="110.8" rx="3" ry="1.8" transform="rotate(30 73.5 110.8)" fill="#d2a016"/>
<ellipse cx="76.1" cy="114.2" rx="3" ry="1.8" transform="rotate(45 76.1 114.2)" fill="#e2b41e"/>
<ellipse cx="71" cy="108.6" rx="3" ry="1.8" transform="rotate(15 71 108.6)" fill="#e2b41e"/>
<ellipse cx="74.4" cy="108.8" rx="3" ry="1.8" transform="rotate(0 74.4 108.8)" fill="#e2b41e"/>
<ellipse cx="67.4" cy="111.4" rx="3" ry="1.8" transform="rotate(90 67.4 111.4)" fill="#d2a016"/>
<ellipse cx="64.8" cy="115.6" rx="3" ry="1.8" transform="rotate(45 64.8 115.6)" fill="#ecc83a"/>
<ellipse cx="63.4" cy="112.2" rx="3" ry="1.8" transform="rotate(60 63.4 112.2)" fill="#d2a016"/>
<ellipse cx="73.3" cy="113.6" rx="3" ry="1.8" transform="rotate(120 73.3 113.6)" fill="#e2b41e"/>
<ellipse cx="62.5" cy="111.4" rx="3" ry="1.8" transform="rotate(120 62.5 111.4)" fill="#ecc83a"/>
<ellipse cx="70.9" cy="115.8" rx="3" ry="1.8" transform="rotate(150 70.9 115.8)" fill="#e4ba28"/>
</g>
<path d="M33,90 L39.6,94 L39,108 L33.6,105 Z" fill="#e31c9c"/>
<path d="M31.7,27 H95.3 V74 C95.3,92 82,105.5 63.5,105.7 C45,105.5 31.7,92 31.7,74 Z" fill="#1e66bd"/>
<path d="M33.3,28.8 H93.7 V74 C93.7,91 81,103.8 63.5,104 C46,103.8 33.3,91 33.3,74 Z" fill="none" stroke="#9cc0ea" stroke-width=".5"/>
<g fill="#e6d03a" stroke="#8f7a1c" stroke-width=".5">
<path d="M42.5,16.5 L54.5,13 L57,21 L46.5,25.5 Z"/>
<path d="M57.5,10.8 H70 V22 H57.5 Z"/>
<path d="M85,16.5 L73,13 L70.5,21 L81,25.5 Z"/>
<path d="M47,24.5 Q63.5,18.5 80.5,24.5 L79.5,28 Q63.5,23 48,28 Z"/>
</g>
<g stroke="#8f7a1c" stroke-width=".35" fill="none"><path d="M57.5,14.6 H70 M57.5,18.4 H70 M61.5,10.8 V14.6 M66,14.6 V18.4 M61.5,18.4 V22 M44.2,19.6 L55.6,16.2 M45.4,22.6 L56.4,18.8 M83.4,19.6 L72,16.2 M82.2,22.6 L71.2,18.8 M49.5,14.6 L50.4,17.6 M78,14.6 L77.2,17.6"/></g>
<g fill="#fff"><circle cx="53.4" cy="39.6" r="2.4"/><circle cx="73.2" cy="39.2" r="2.4"/><circle cx="63.3" cy="46.1" r="2.4"/></g>
<g stroke="#fff" fill="none" stroke-linecap="round">
<path d="M45,86.4 Q72,70 85.4,40" stroke-width="2"/>
<path d="M46,79.6 L53,85" stroke-width="1.5"/><path d="M42.4,88.6 L45.4,85.8" stroke-width="2.4"/>
<path d="M41,42 L81,86" stroke-width="1.2"/>
<path d="M72,76 L81,85.6 M70.4,78.4 L78.6,87.6 M74,74.4 L83,83.6" stroke-width="1.6"/>
</g>
<path d="M38.6,39.6 L45.4,42.4 L41.6,46.4 Z" fill="#fff"/>
<path id="arc" d="M44,126 Q63.5,135.5 88,124.5" fill="none"/>
<text font-family="'Liberation Sans',sans-serif" font-weight="bold" font-size="5.2" fill="#e8f0fb" letter-spacing="3.5"><textPath href="#arc" startOffset="1.5">ДНІПРО</textPath></text>
<path d="M7.7,168.5 L7.7,156.5 L9.4,155.7 L11.1,154.7 L12.8,153.6 L14.5,152.6 L16.2,151.8 L17.9,151.4 L19.6,151.3 L21.3,151.7 L23,152.3 L24.7,153.3 L26.4,154.4 L28.1,155.4 L29.8,156.3 L31.5,156.9 L33.2,157.1 L34.9,156.9 L36.6,156.4 L38.3,155.5 L40,154.5 L41.7,153.4 L43.4,152.4 L45.1,151.7 L46.8,151.3 L48.5,151.4 L50.2,151.8 L51.9,152.5 L53.6,153.5 L55.3,154.5 L57,155.6 L58.7,156.4 L60.4,156.9 L62.1,157.1 L63.8,156.9 L65.5,156.2 L67.2,155.3 L68.9,154.3 L70.6,153.2 L72.3,152.3 L74,151.6 L75.7,151.3 L77.4,151.4 L79.1,151.9 L80.8,152.7 L82.5,153.7 L84.2,154.7 L85.9,155.7 L87.6,156.5 L89.3,157 L91,157.1 L92.7,156.8 L94.4,156.1 L96.1,155.2 L97.8,154.1 L99.5,153.1 L101.2,152.2 L102.9,151.5 L104.6,151.3 L106.3,151.5 L108,152 L109.7,152.8 L111.4,153.9 L113.1,154.9 L114.8,155.9 L116.5,156.6 L117.2,168.5 Z" fill="#1e66bd"/>
</g></svg>
<svg id="mdpu" style="left:634px;top:331px" width="110" height="85" viewBox="0 0 110 85"><g id="mdpug">
<path d="M53.8,13.1 L74,23 V36.1 L53.8,44.2 L34.2,36.1 V23 Z" fill="#fff" stroke="#35b24a" stroke-width="1.4" stroke-linejoin="round"/>
<path d="M53.8,15.6 L70.3,23 L53.8,29.9 L38,23 Z" fill="#f7941d"/>
<path d="M38,23.8 L53.8,30.6 V41.7 L38,34.9 Z" fill="#1c78c8"/>
<path d="M70.3,23.8 L53.8,30.6 V41.7 L70.3,34.9 Z" fill="#2386d6"/>
<path d="M43,31 L48.5,33.4 V39.4 L43,37 Z" fill="#f58a1f"/>
<path d="M49.5,34 L53.8,35.5 V41.7 L49.5,40 Z" fill="#e8402a"/>
<path d="M53.8,35.5 L58,33.8 V40 L53.8,41.7 Z" fill="#f15a29"/>
<path d="M59.5,33 L65,30.6 V37 L59.5,39.3 Z" fill="#f7941d"/>
<text x="53.8" y="56" text-anchor="middle" textLength="59" lengthAdjust="spacingAndGlyphs" font-family="'Liberation Sans',sans-serif" font-weight="bold" font-size="14" fill="#1c79c6">МДПУ</text>
<text x="53.8" y="61.8" text-anchor="middle" textLength="58" lengthAdjust="spacingAndGlyphs" font-family="'Liberation Sans',sans-serif" font-size="2.6" fill="#3a7fc4">імені Богдана Хмельницького</text>
<text x="54" y="67.3" text-anchor="middle" textLength="84" lengthAdjust="spacingAndGlyphs" font-family="'Liberation Sans',sans-serif" font-size="5.6" fill="#e9b032">Більше, ніж університет!</text>
<g stroke="#55b948" stroke-width=".7" fill="none" stroke-linecap="round"><path d="M28,70.4 L64,69"/><path d="M30.5,75.3 L64,71"/><path d="M66,72.2 H89"/></g>
</g></svg>
<div class="t" style="left:310px;top:53px;width:206px;text-align:center;font:bold 12.1px 'Liberation Serif',serif;color:#1a1a1a">Структура Дніпровської міської ради</div>
<div class="t" style="left:663px;top:35.8px;font:italic 12.6px 'Liberation Serif',serif;color:#222">Таблиця</div>
<div class="a" id="mk1" style="left:118px;top:61px;width:3.4px;height:3.4px;border:.6px solid #a0a0a0"></div><div class="a" id="mk2" style="left:706.6px;top:316.4px;width:3px;height:3px;border:.6px solid #b8b8b8"></div>
<div class="a" id="caret" style="left:516.4px;top:53px;width:1px;height:13px;background:#444"></div>
<div class="a" id="tbl" style="left:120.9px;top:68.2px;width:586.3px;height:247.6px"></div>
<div class="a" style="left:120.9px;top:119.4px;width:586.3px;height:1px;background:#707070"></div>
<div class="t" style="left:121px;top:87px;width:586px;text-align:center;font:bold 13.9px 'Liberation Serif',serif;color:#1a1a1a">Дніпровський міський голова</div>
<div class="a c" style="left:121.4px;top:121px;width:64.6px">Заступник<br>міського<br>голови з<br>питань<br>діяльності<br>виконавчих<br>органів,<br>директор<br>департамен<br>ту охорони<br>здоров’я<br>населення<br>Дніпровської<br>міської ради</div>
<div class="v" style="left:185.4px"></div>
<div class="a c" style="left:185.9px;top:121px;width:63.9px">Заступник<br>міського<br>голови з<br>питань<br>діяльності<br>виконавчих<br>органів,<br>директор<br>департамен<br>ту<br>соціальної<br>політики<br>Дніпровської<br>міської ради</div>
<div class="v" style="left:249.3px"></div>
<div class="a c" style="left:249.8px;top:121px;width:71.2px">Заступник<br>міського<br>голови з<br>питань<br>діяльності<br>виконавчих<br>органів,<br>директор<br>департаменту<br>транспорту<br>та<br>транспортної<br>інфраструкту<br>ри<br>Дніпровської<br>міської ради</div>
<div class="v" style="left:320.5px"></div>
<div class="a c" style="left:321.0px;top:121px;width:64.4px">Керуючий<br>справами<br>виконавчого<br>комітету<br>міської ради<br>– директор<br>департамен<br>ту<br>забезпечення<br>діяльності<br>виконавчих<br>органів<br>Дніпровської<br>міської ради</div>
<div class="v" style="left:384.9px"></div>
<div class="a c" style="left:385.4px;top:121px;width:65.6px">Заступник<br>міського<br>голови з<br>питань<br>діяльності<br>виконавчих<br>органів щодо<br>цифрової<br>трансформа<br>ції</div>
<div class="v" style="left:450.5px"></div>
<div class="a c" style="left:451.0px;top:121px;width:64.0px">Заступник<br>міського<br>голови з<br>питань<br>діяльності<br>виконавчих<br>органів,<br>директор<br>департамен<br>ту<br>економіки,<br>фінансів та<br>міського<br>бюджету<br>Дніпровської<br>міської ради</div>
<div class="v" style="left:514.5px"></div>
<div class="a c" style="left:515.0px;top:121px;width:55.9px">Секретар<br>Дніпровськ<br>ої міської<br>ради</div>
<div class="v" style="left:570.4px"></div>
<div class="a c" style="left:570.9px;top:121px;width:64.1px">Заступник<br>міського<br>голови з<br>питань<br>діяльності<br>виконавчих<br>органів,<br>директор<br>департамен<br>ту<br>гуманітарної<br>політики<br>Дніпровської<br>міської ради</div>
<div class="v" style="left:634.5px"></div>
<div class="a c" style="left:635.0px;top:121px;width:71.7px">Заступник<br>міського<br>голови з<br>питань<br>діяльності<br>виконавчих<br>органів щодо<br>інформаційної<br>діяльності</div>
</div>
<div class="a" id="status"></div>
<div class="t" style='left:14.5px;top:554.2px;font-size:9.4px;color:#d6d6d6;transform:scaleX(0.929);transform-origin:0 0;'>Слайд 8 из 15</div>
<div class="t" style='left:85.8px;top:554.2px;font-size:9.4px;color:#d6d6d6;letter-spacing:-0.06px;'>русский (Украина)</div>
<svg style="left:608.5px;top:554.0px" width="10" height="10" viewBox="0 0 10 10" fill="none" stroke="#d8d8d8" stroke-width="1"><path d="M0.5,3.2 H9.5 M0.5,5.6 H9.5 M0.5,8 H7"/><path d="M3.4,1.2 H6.6" stroke-width="1.4"/></svg>
<div class="t" style='left:620.5px;top:554.2px;font-size:9.4px;color:#d6d6d6;letter-spacing:-0.23px;'>Заметки</div>
<svg style="left:669.5px;top:554.3px" width="10" height="10" viewBox="0 0 10 10"><path d="M0.6,0.8 H9.4 V6.6 H4.6 L2.4,8.8 V6.6 H0.6 Z" fill="#e6e6e6"/></svg>
<div class="t" style='left:681.8px;top:554.2px;font-size:9.4px;color:#d6d6d6;letter-spacing:-0.25px;'>Примечания</div>
<div class="a" style="left:741px;top:551.5px;width:26px;height:15px;background:#606060"></div>
<svg style="left:748.5px;top:554.0px" width="11" height="10" viewBox="0 0 11 10"><rect x="0.5" y="0.5" width="10" height="9" rx="1" fill="#f2f2f2"/><rect x="1.6" y="1.8" width="2" height="6.4" fill="#555"/><rect x="4.8" y="1.8" width="4.6" height="2.6" fill="#555"/><rect x="4.8" y="5.6" width="4.6" height="1" fill="#555"/></svg>
<svg style="left:773.5px;top:554.0px" width="12" height="10" viewBox="0 0 12 10" fill="#e8e8e8"><rect x="0" y="0.6" width="5" height="3.6"/><rect x="6.6" y="0.6" width="5" height="3.6"/><rect x="0" y="5.8" width="5" height="3.6"/><rect x="6.6" y="5.8" width="5" height="3.6"/></svg>
<svg style="left:798.5px;top:554.0px" width="12" height="10" viewBox="0 0 12 10" fill="none" stroke="#dcdcdc" stroke-width="1"><rect x="0.6" y="0.8" width="10.8" height="8.4"/><path d="M6,0.8 V9.2 M2,3 H4.6 M2,5 H4.6 M2,7 H4.6 M7.4,3 H10 M7.4,5 H10 M7.4,7 H10" stroke-width=".8"/></svg>
<svg style="left:823.5px;top:553.6px" width="12" height="11" viewBox="0 0 12 11" fill="none" stroke="#dcdcdc" stroke-width="1"><path d="M0.4,0.8 H11.6"/><rect x="1.4" y="0.8" width="9.2" height="5.8" fill="#dcdcdc"/><path d="M6,6.6 V9 M3.8,10.2 H8.2" /></svg>
<div class="a" style="left:848.5px;top:558.4px;width:5px;height:1.5px;background:#e0e0e0"></div>
<div class="a" style="left:858px;top:557.6px;width:70.5px;height:3px;border-radius:2px;background:#6a6a6a"></div>
<div class="a" style="left:889px;top:553.6px;width:11px;height:11px;border-radius:50%;background:#9c9c9c;border:1px solid #b4b4b4"></div>
<div class="a" style="left:933.5px;top:558.3px;width:6.6px;height:1.6px;background:#e6e6e6"></div>
<div class="a" style="left:936px;top:555.8px;width:1.6px;height:6.6px;background:#e6e6e6"></div>
<div class="t" style='left:952.0px;top:554.4px;font-size:9.2px;color:#d6d6d6;transform:scaleX(0.840);transform-origin:0 0;'>111%</div>
<svg style="left:985px;top:554.0px" width="10" height="10" viewBox="0 0 10 10" fill="none" stroke="#dcdcdc" stroke-width="1"><rect x="0.5" y="0.5" width="9" height="9"/><path d="M2.2,4 V2.2 H4 M6,2.2 H7.8 V4 M7.8,6 V7.8 H6 M4,7.8 H2.2 V6" stroke-width="1.1"/></svg>
</div>
<div class="a" id="tool"></div>
<svg style="left:26.6px;top:642.0px" width="20.0" height="21.0" viewBox="0 0 20 21" ><rect x="7.2" y="1" width="6" height="11" rx="3" fill="none" stroke="#f2f2f2" stroke-width="1.4"/><path d="M4.2,9.4 Q4.2,15 10.2,15 Q16.2,15 16.2,9.4 M10.2,15 V19 M7.4,19.4 H13" fill="none" stroke="#f2f2f2" stroke-width="1.4" stroke-linecap="round"/><path d="M0.6,19.6 L19.4,0.8" stroke="#3c3c3c" stroke-width="4"/><path d="M0.6,19.6 L19.4,0.8" stroke="#f0325e" stroke-width="2.3" stroke-linecap="round"/></svg>
<svg style="left:59.2px;top:649.8px" width="6.0" height="4.4" viewBox="0 0 10 6.4"><path d="M1.2,5.2 L5,1.4 L8.8,5.2" fill="none" stroke="#e8e8e8" stroke-width="2.5" stroke-linecap="round" stroke-linejoin="round"/></svg>
<div class="t" style='left:25.7px;top:667.8px;font-size:10.6px;color:#c9c9c9;transform:scaleX(0.952);transform-origin:0 0;'>Звук</div>
<svg style="left:103.6px;top:647.3px" width="21.0" height="12.0" viewBox="0 0 21 12" ><rect x="0.8" y="0.8" width="13.4" height="10.4" rx="2.6" fill="none" stroke="#f2f2f2" stroke-width="1.5"/><path d="M14.6,4.4 L19.8,1.6 V10.4 L14.6,7.6" fill="none" stroke="#f2f2f2" stroke-width="1.5" stroke-linejoin="round"/></svg>
<svg style="left:141.8px;top:649.8px" width="6.0" height="4.4" viewBox="0 0 10 6.4"><path d="M1.2,5.2 L5,1.4 L8.8,5.2" fill="none" stroke="#e8e8e8" stroke-width="2.5" stroke-linecap="round" stroke-linejoin="round"/></svg>
<div class="t" style='left:99.5px;top:667.8px;font-size:10.6px;color:#c9c9c9;transform:scaleX(0.937);transform-origin:0 0;'>Видео</div>
<svg style="left:436.0px;top:645.4px" width="16.0" height="15.6" viewBox="0 0 16 15.6" ><circle cx="5.2" cy="3.6" r="2.6" fill="none" stroke="#f2f2f2" stroke-width="1.4"/><path d="M0.8,14.6 V12 Q0.8,8.2 5.2,8.2 Q9.6,8.2 9.6,12 V14.6 Z" fill="none" stroke="#f2f2f2" stroke-width="1.4" stroke-linejoin="round"/><circle cx="12" cy="5.6" r="2" fill="none" stroke="#f2f2f2" stroke-width="1.3"/><path d="M11.4,9.6 Q15.2,9.4 15.2,12.6 V14.6 H12" fill="none" stroke="#f2f2f2" stroke-width="1.3" stroke-linejoin="round"/></svg>
<div class="t" style='left:458.6px;top:646.0px;font-size:10.6px;color:#a8a8a8;transform:scaleX(0.914);transform-origin:0 0;'>9</div>
<svg style="left:485.0px;top:649.8px" width="6.6" height="4.4" viewBox="0 0 10 6.4"><path d="M1.2,5.2 L5,1.4 L8.8,5.2" fill="none" stroke="#e8e8e8" stroke-width="2.5" stroke-linecap="round" stroke-linejoin="round"/></svg>
<div class="t" style='left:419.4px;top:667.8px;font-size:10.6px;color:#c9c9c9;letter-spacing:-0.10px;'>Участники</div>
<svg style="left:527.0px;top:644.0px" width="19.0" height="18.0" viewBox="0 0 19 18" ><path d="M5.4,4 V3.4 Q5.4,0.8 8,0.8 H15.6 Q18.2,0.8 18.2,3.4 V8.6 Q18.2,11 16,11.2" fill="none" stroke="#f2f2f2" stroke-width="1.4"/><path d="M3.4,4.6 H12 Q14.6,4.6 14.6,7.2 V11.6 Q14.6,14.2 12,14.2 H7.2 L3.8,17 V14.2 H3.4 Q0.8,14.2 0.8,11.6 V7.2 Q0.8,4.6 3.4,4.6 Z" fill="#3c3c3c" stroke="#f2f2f2" stroke-width="1.4" stroke-linejoin="round"/><circle cx="4.8" cy="9.4" r=".9" fill="#f2f2f2"/><circle cx="7.7" cy="9.4" r=".9" fill="#f2f2f2"/><circle cx="10.6" cy="9.4" r=".9" fill="#f2f2f2"/></svg>
<svg style="left:561.4px;top:649.8px" width="6.6" height="4.4" viewBox="0 0 10 6.4"><path d="M1.2,5.2 L5,1.4 L8.8,5.2" fill="none" stroke="#e8e8e8" stroke-width="2.5" stroke-linecap="round" stroke-linejoin="round"/></svg>
<div class="t" style='left:529.3px;top:667.8px;font-size:10.6px;color:#c9c9c9;transform:scaleX(0.876);transform-origin:0 0;'>Чат</div>
<svg style="left:606.2px;top:645.0px" width="21.0" height="17.0" viewBox="0 0 21 17" ><path transform="rotate(9 10.5 8.5)" d="M10.5,15.6 Q1,9.6 1,5.4 Q1,1 5.4,1 Q8.6,1 10.5,4 Q12.4,1 15.6,1 Q20,1 20,5.4 Q20,9.6 10.5,15.6 Z" fill="none" stroke="#f2f2f2" stroke-width="1.5" stroke-linejoin="round"/></svg>
<svg style="left:645.0px;top:649.8px" width="6.8" height="4.4" viewBox="0 0 10 6.4"><path d="M1.2,5.2 L5,1.4 L8.8,5.2" fill="none" stroke="#e8e8e8" stroke-width="2.5" stroke-linecap="round" stroke-linejoin="round"/></svg>
<div class="t" style='left:581.8px;top:667.8px;font-size:10.6px;color:#c9c9c9;letter-spacing:-0.28px;'>Отреагировать</div>
<div class="a" style="left:690px;top:644.6px;width:20px;height:16.8px;border-radius:3.4px;background:#21d97f"></div>
<svg style="left:695.4px;top:647.6px" width="9.2" height="10.6" viewBox="0 0 9.2 10.6" ><path d="M4.6,9.8 V1.8 M1,4.8 L4.6,1.2 L8.2,4.8" fill="none" stroke="#1f3a2c" stroke-width="1.9" stroke-linecap="round" stroke-linejoin="round"/></svg>
<div class="t" style='left:673.0px;top:667.8px;font-size:10.6px;color:#c9c9c9;transform:scaleX(0.937);transform-origin:0 0;'>Поделиться</div>
<svg style="left:769.6px;top:644.0px" width="19.0" height="18.0" viewBox="0 0 19 18" ><path d="M0.9,7.4 V4.2 Q0.9,0.9 4.2,0.9 H7.4 M18.1,10.6 V13.8 Q18.1,17.1 14.8,17.1 H11.6" fill="none" stroke="#f2f2f2" stroke-width="1.5" stroke-linecap="round"/><circle cx="14.4" cy="4.6" r="3.1" fill="none" stroke="#f2f2f2" stroke-width="1.5"/><circle cx="4.6" cy="13.4" r="3.1" fill="none" stroke="#f2f2f2" stroke-width="1.5"/></svg>
<div class="t" style='left:748.4px;top:667.8px;font-size:10.6px;color:#c9c9c9;letter-spacing:-0.09px;'>Приложения</div>
<svg style="left:840.4px;top:643.2px" width="20.0" height="20.0" viewBox="0 0 20 20" ><circle cx="10" cy="10" r="8.8" fill="none" stroke="#f2f2f2" stroke-width="1.5"/><circle cx="10" cy="10" r="3.6" fill="#f2f2f2"/></svg>
<div class="t" style='left:833.9px;top:667.8px;font-size:10.6px;color:#c9c9c9;transform:scaleX(0.943);transform-origin:0 0;'>Запись</div>
<svg style="left:917.4px;top:643.2px" width="20.0" height="20.0" viewBox="0 0 20 20" ><circle cx="10" cy="10" r="8.8" fill="none" stroke="#f2f2f2" stroke-width="1.5"/><circle cx="6" cy="10" r="1.1" fill="#f2f2f2"/><circle cx="10" cy="10" r="1.1" fill="#f2f2f2"/><circle cx="14" cy="10" r="1.1" fill="#f2f2f2"/></svg>
<div class="t" style='left:890.0px;top:667.8px;font-size:10.6px;color:#c9c9c9;letter-spacing:-0.12px;'>Дополнительно</div>
<svg style="left:1228.0px;top:641.0px" width="24.0" height="23.0" viewBox="0 0 24 23" ><rect x="14.2" y="1.6" width="7.4" height="19" rx="1.6" fill="#8c1c3e" fill-opacity=".55" stroke="#ee1650" stroke-width="1.8"/><circle cx="9.4" cy="6.4" r="2.1" fill="#4a4a4a" stroke="#f2f2f2" stroke-width="1.3"/><path d="M8.6,9.6 L5.6,10.6 L3.8,13.6 M8.8,9.6 L7.4,14.6 L10.4,17 L10.8,21.2 M7.4,14.6 L5.6,18 L3,21 M9.4,10 L11.4,12.6 L14,13.6" fill="none" stroke="#f2f2f2" stroke-width="2.6" stroke-linecap="round" stroke-linejoin="round"/><path d="M8.6,9.6 L5.6,10.6 L3.8,13.6 M8.8,9.6 L7.4,14.6 L10.4,17 L10.8,21.2 M7.4,14.6 L5.6,18 L3,21 M9.4,10 L11.4,12.6 L14,13.6" fill="none" stroke="#4a4a4a" stroke-width=".7" stroke-linecap="round" stroke-linejoin="round"/></svg>
<div class="t" style='left:1225.3px;top:667.4px;font-size:10.6px;color:#c9c9c9;transform:scaleX(0.908);transform-origin:0 0;'>Выйти</div>
<div class="a" style="left:1015px;top:353px;width:1.2px;height:21px;background:#9a9a9a"></div><div class="a" style="left:1017.6px;top:353px;width:1.2px;height:21px;background:#9a9a9a"></div>
<div class="a" id="cam">
<div class="a" style="left:0;top:0;width:254px;height:143px;background:linear-gradient(90deg,#d3d2d1 0,#dbdad9 22%,#e4e3e2 55%,#e9e8e7 85%,#e2e1e0 100%)"></div>
<svg style="left:0;top:0;filter:blur(1.1px)" width="254" height="143" viewBox="0 0 254 143">
<rect x="101.6" y="8.6" width="60" height="78" fill="#2b2b2d" stroke="#0e0e10" stroke-width="2.4"/>
<path d="M108,40 Q120,22 132,36 T152,34 M112,58 Q124,48 130,30 M110,70 Q122,60 128,64" fill="none" stroke="#5c5c60" stroke-width=".7"/>
<path d="M48,146 L57,128 Q74,115 89,109 Q104,102 117,97 L136,97 L178,96 Q195,98 208,104 Q221,112 225,128 L230,146 Z" fill="#0c0c0d"/>
<ellipse cx="114.4" cy="80" rx="3.6" ry="8.6" fill="#c7977e"/>
<path d="M115,58 Q114,32 148,30 Q182,32 181,60 Q182,94 172,113 Q162,129 150,129.5 Q136,129 125,112 Q115,94 115,58 Z" fill="#d6a993"/>
<ellipse cx="150" cy="62" rx="28" ry="18" fill="#e0bba8" opacity=".9"/>
<ellipse cx="150" cy="98" rx="21" ry="17" fill="#dcb19c" opacity=".8"/>
<path d="M115,64 Q111,36 126,27 Q147,17 168,23 Q185,30 183,58 Q180,46 172,42.5 Q150,38 130,44 Q120,48 117,66 Z" fill="#5e412d"/>
<path d="M128,29 Q147,20 167,26 Q150,26 133,35 Z" fill="#8a6644"/>
<path d="M131,71 Q139,68 147,71 M160,72 Q168,69 176,73" stroke="#7a5a48" stroke-width="1.8" fill="none"/>
<path d="M133,76 Q140,78.5 147,76 M161,77 Q168,79.5 175,77" stroke="#8a6454" stroke-width="1.8" fill="none"/>
<path d="M154,80 Q152,90 153,94 Q157,96 161,93" stroke="#c09480" stroke-width="2" fill="none"/>
<ellipse cx="153" cy="109.6" rx="9" ry="3.2" fill="#b4766c"/>
<path d="M126,112 Q136,128 150,129.5 Q163,128 172,113" stroke="#c0907a" stroke-width="2.4" fill="none"/>
</svg>
<div class="a" style="left:0;top:127.4px;width:86.6px;height:16px;background:rgba(34,34,34,.85);border-radius:3px 3px 0 0"></div>
<svg style="left:3.2px;top:130.6px" width="12.4" height="9.6" viewBox="0 0 12.4 9.6" fill="#fff"><rect x="0" y="6.4" width="2" height="3.2"/><rect x="3.4" y="4.4" width="2" height="5.2"/><rect x="6.8" y="2.2" width="2" height="7.4"/><rect x="10.2" y="0" width="2" height="9.6"/></svg>
</div>
<div class="t" style='left:1041.0px;top:400.7px;font-size:10.2px;color:#ffffff;letter-spacing:0.03px;'>Євген Ігнатов</div>
</div>
</body>
</html>
